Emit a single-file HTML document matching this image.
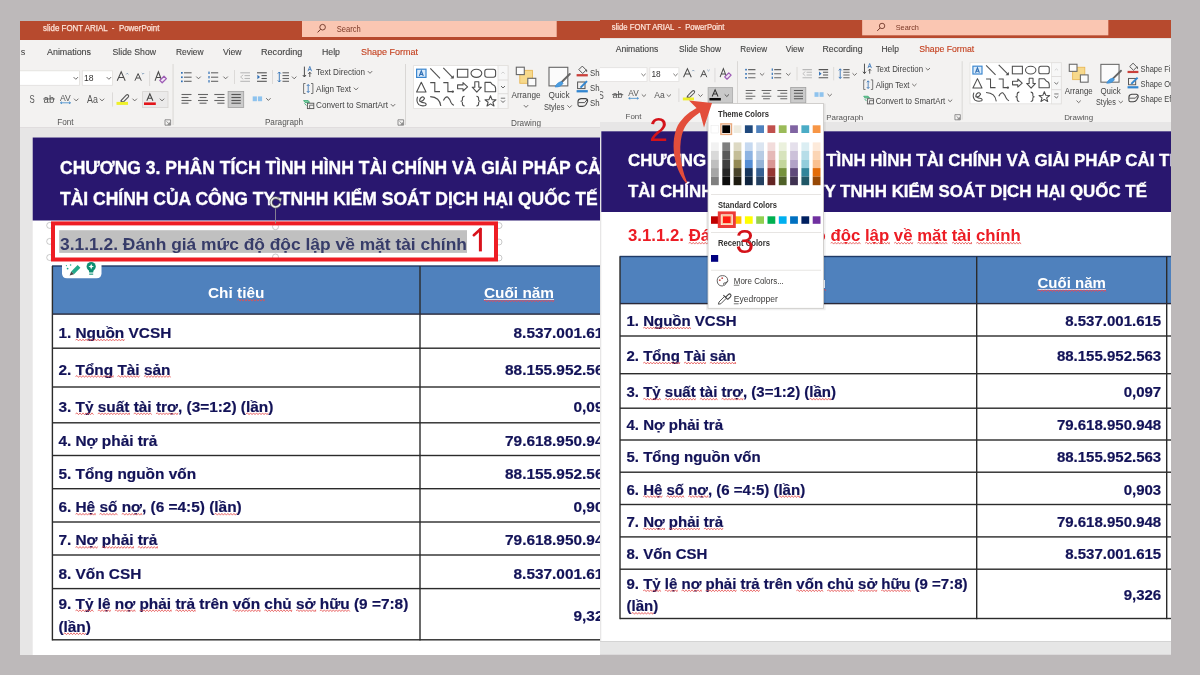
<!DOCTYPE html>
<html><head><meta charset="utf-8"><style>
html,body{margin:0;padding:0;width:1200px;height:675px;overflow:hidden;background:#bdb9ba;}
svg{display:block;font-family:"Liberation Sans",sans-serif;will-change:transform;}
</style></head><body>
<svg width="1200" height="675" viewBox="0 0 1200 675">
<defs>
<clipPath id="cl"><rect x="20" y="21" width="580" height="634"/></clipPath>
<clipPath id="cr"><rect x="600" y="20" width="571" height="634.5"/></clipPath>
</defs>
<rect x="0" y="0" width="1200" height="675" fill="#bdb9ba"/>
<g clip-path="url(#cl)">
<rect x="0.00" y="21.00" width="640.00" height="19.00" fill="#b74a2e" /><text xml:space="preserve" x="43.00" y="31.30" font-size="8.8" fill="#fde3d8" textLength="116.5" lengthAdjust="spacingAndGlyphs" stroke="#fde3d8" stroke-width="0.25">slide FONT ARIAL  -  PowerPoint</text><rect x="302.00" y="21.00" width="254.70" height="16.00" fill="#fac6b2" /><circle cx="322.6" cy="27.2" r="2.8" stroke="#6d3325" stroke-width="0.9" fill="none"/><path d="M320.6,29.3 L317.6,32.4" stroke="#6d3325" stroke-width="1" /><text xml:space="preserve" x="336.70" y="31.60" font-size="8.4" fill="#7a3826" textLength="24" lengthAdjust="spacingAndGlyphs" >Search</text><rect x="0.00" y="40.00" width="640.00" height="87.50" fill="#f3f2f1" /><text xml:space="preserve" x="25.30" y="54.80" font-size="9.2" fill="#444444" text-anchor="end" >Transitions</text><text xml:space="preserve" x="47.00" y="54.80" font-size="9.2" fill="#444444" textLength="44" lengthAdjust="spacingAndGlyphs" stroke="#444444" stroke-width="0.12">Animations</text><text xml:space="preserve" x="112.50" y="54.80" font-size="9.2" fill="#444444" textLength="43.5" lengthAdjust="spacingAndGlyphs" stroke="#444444" stroke-width="0.12">Slide Show</text><text xml:space="preserve" x="176.00" y="54.80" font-size="9.2" fill="#444444" textLength="27.599999999999994" lengthAdjust="spacingAndGlyphs" stroke="#444444" stroke-width="0.12">Review</text><text xml:space="preserve" x="223.00" y="54.80" font-size="9.2" fill="#444444" textLength="18.599999999999994" lengthAdjust="spacingAndGlyphs" stroke="#444444" stroke-width="0.12">View</text><text xml:space="preserve" x="261.00" y="54.80" font-size="9.2" fill="#444444" textLength="41.39999999999998" lengthAdjust="spacingAndGlyphs" stroke="#444444" stroke-width="0.12">Recording</text><text xml:space="preserve" x="322.00" y="54.80" font-size="9.2" fill="#444444" textLength="18" lengthAdjust="spacingAndGlyphs" stroke="#444444" stroke-width="0.12">Help</text><text xml:space="preserve" x="361.00" y="54.80" font-size="9.2" fill="#c43e1c" textLength="57" lengthAdjust="spacingAndGlyphs" stroke="#c43e1c" stroke-width="0.12">Shape Format</text><rect x="-10.00" y="70.80" width="89.40" height="14.50" fill="#ffffff" stroke="#e1dfdd" stroke-width="0.8"/><path d="M73.60,77.10 L75.80,79.30 L78.00,77.10" stroke="#605e5c" stroke-width="0.9" fill="none"/><rect x="82.30" y="70.80" width="30.10" height="14.50" fill="#ffffff" stroke="#e1dfdd" stroke-width="0.8"/><text xml:space="preserve" x="84.00" y="81.00" font-size="8.6" fill="#323130" >18</text><path d="M106.70,77.10 L108.90,79.30 L111.10,77.10" stroke="#605e5c" stroke-width="0.9" fill="none"/><path d="M117.2,80.7 L121.2,71.8 L125.2,80.7 M118.8,77.4 L123.6,77.4" stroke="#4a4a4a" stroke-width="1.05" fill="none"/><path d="M126.2,74.4 L127.3,73.2 L128.4,74.4" stroke="#6f8fb0" stroke-width="0.8" fill="none"/><path d="M134.9,80.7 L138.1,73.6 L141.3,80.7 M136.2,78 L140,78" stroke="#4a4a4a" stroke-width="1.0" fill="none"/><path d="M141.8,73 L143,74.2 L144.2,73" stroke="#6f8fb0" stroke-width="0.8" fill="none"/><rect x="149.30" y="71.00" width="0.80" height="15.00" fill="#d6d4d2" /><path d="M155,80.7 L158.4,71.8 L161.8,80.7 M156.3,77.4 L160.5,77.4" stroke="#4a4a4a" stroke-width="1.05" fill="none"/><path d="M159.8,80.4 L164,76.2 L166.4,78.6 L162.2,82.8 Z" fill="#f3e6f6" stroke="#9d5cb5" stroke-width="1.3" stroke-linejoin="round"/><text xml:space="preserve" x="29.60" y="103.40" font-size="10.6" fill="#555" textLength="5.2" lengthAdjust="spacingAndGlyphs" >S</text><text xml:space="preserve" x="43.60" y="102.60" font-size="10" fill="#555" textLength="10.6" lengthAdjust="spacingAndGlyphs" >ab</text><rect x="43.20" y="98.50" width="11.60" height="0.90" fill="#555" /><text xml:space="preserve" x="60.00" y="100.50" font-size="8.8" fill="#555" textLength="10.8" lengthAdjust="spacingAndGlyphs" >AV</text><path d="M60.5,102.8 L70.5,102.8 M60.5,102.8 L62,101.7 M60.5,102.8 L62,103.9 M70.5,102.8 L69,101.7 M70.5,102.8 L69,103.9" stroke="#3a87c9" stroke-width="0.8" fill="none"/><path d="M74.00,98.70 L76.20,100.90 L78.40,98.70" stroke="#605e5c" stroke-width="0.9" fill="none"/><text xml:space="preserve" x="87.00" y="102.70" font-size="10" fill="#555" textLength="10.8" lengthAdjust="spacingAndGlyphs" >Aa</text><path d="M99.80,98.70 L102.00,100.90 L104.20,98.70" stroke="#605e5c" stroke-width="0.9" fill="none"/><rect x="112.00" y="92.40" width="0.80" height="14.20" fill="#d6d4d2" /><path d="M121,100.6 L126.2,95.2 Q127.4,94.2 128.3,95.1 Q129.2,96 128.2,97.2 L123,102.4 Z" fill="none" stroke="#555" stroke-width="1.1" stroke-linejoin="round"/><path d="M121,100.6 L123,102.4 L119.8,103.2 Z" fill="#4b3f73"/><rect x="116.50" y="101.90" width="11.50" height="3.00" fill="#eef02a" /><path d="M132.50,98.70 L134.70,100.90 L136.90,98.70" stroke="#605e5c" stroke-width="0.9" fill="none"/><rect x="142.60" y="91.60" width="25.40" height="16.00" fill="#ebeaea" stroke="#d6d4d2" stroke-width="0.8"/><path d="M146.8,100.8 L149.85,93.8 L152.9,100.8 M148,98.3 L151.7,98.3" stroke="#444" stroke-width="1.05" fill="none"/><rect x="144.00" y="102.40" width="11.80" height="2.60" fill="#e3151a" /><path d="M159.80,98.70 L162.00,100.90 L164.20,98.70" stroke="#605e5c" stroke-width="0.9" fill="none"/><text xml:space="preserve" x="65.40" y="124.70" font-size="8.2" fill="#555" text-anchor="middle" >Font</text><path d="M165,119.8 L170.6,119.8 L170.6,125.2 L165,125.2 Z M166.6,121.4 L169.6,124.4 M169.6,122.4 L169.6,124.4 L167.6,124.4" stroke="#666" stroke-width="0.7" fill="none"/><rect x="172.60" y="64.00" width="0.90" height="61.00" fill="#d6d4d2" /><rect x="181.00" y="72.00" width="1.70" height="1.70" fill="#2f6fb5" /><rect x="181.00" y="76.40" width="1.70" height="1.70" fill="#2f6fb5" /><rect x="181.00" y="80.50" width="1.70" height="1.70" fill="#2f6fb5" /><path d="M184,72.8 L191.6,72.8" stroke="#666" stroke-width="1.1"/><path d="M184,77.2 L191.6,77.2" stroke="#666" stroke-width="1.1"/><path d="M184,81.3 L191.6,81.3" stroke="#666" stroke-width="1.1"/><path d="M196.30,76.60 L198.50,78.80 L200.70,76.60" stroke="#605e5c" stroke-width="0.9" fill="none"/><rect x="208.40" y="71.60" width="1.20" height="2.40" fill="#2f6fb5" /><rect x="208.40" y="76.00" width="1.20" height="2.40" fill="#2f6fb5" /><rect x="208.40" y="80.10" width="1.20" height="2.40" fill="#2f6fb5" /><path d="M211,72.8 L218.2,72.8" stroke="#666" stroke-width="1.1"/><path d="M211,77.2 L218.2,77.2" stroke="#666" stroke-width="1.1"/><path d="M211,81.3 L218.2,81.3" stroke="#666" stroke-width="1.1"/><path d="M223.40,76.60 L225.60,78.80 L227.80,76.60" stroke="#605e5c" stroke-width="0.9" fill="none"/><rect x="234.20" y="70.00" width="0.80" height="14.00" fill="#d6d4d2" /><path d="M240.3,72.8 L250,72.8" stroke="#b8b8b8" stroke-width="1.1"/><path d="M240.3,81.3 L250,81.3" stroke="#b8b8b8" stroke-width="1.1"/><path d="M244.5,75.6 L250,75.6" stroke="#b8b8b8" stroke-width="1.1"/><path d="M244.5,78.5 L250,78.5" stroke="#b8b8b8" stroke-width="1.1"/><path d="M243.2,74.8 L240.6,77 L243.2,79.2" stroke="#b8b8b8" stroke-width="0.9" fill="none"/><path d="M257,72.8 L266.8,72.8" stroke="#555" stroke-width="1.1"/><path d="M257,81.3 L266.8,81.3" stroke="#555" stroke-width="1.1"/><path d="M261.5,75.6 L266.8,75.6" stroke="#555" stroke-width="1.1"/><path d="M261.5,78.5 L266.8,78.5" stroke="#555" stroke-width="1.1"/><path d="M257.4,74.8 L260,77 L257.4,79.2 Z" fill="#2f6fb5"/><rect x="272.20" y="70.00" width="0.80" height="14.00" fill="#d6d4d2" /><path d="M279.3,72 L279.3,82 M277.8,73.6 L279.3,72 L280.8,73.6 M277.8,80.4 L279.3,82 L280.8,80.4" stroke="#2f6fb5" stroke-width="0.9" fill="none"/><path d="M282.5,72.8 L289,72.8" stroke="#666" stroke-width="1.1"/><path d="M282.5,75.6 L289,75.6" stroke="#666" stroke-width="1.1"/><path d="M282.5,78.5 L289,78.5" stroke="#666" stroke-width="1.1"/><path d="M282.5,81.3 L289,81.3" stroke="#666" stroke-width="1.1"/><path d="M292.00,76.60 L294.20,78.80 L296.40,76.60" stroke="#605e5c" stroke-width="0.9" fill="none"/><path d="M181.5,94.5 L191.5,94.5" stroke="#666" stroke-width="1.1"/><path d="M181.5,100.5 L191.5,100.5" stroke="#666" stroke-width="1.1"/><path d="M181.5,97.5 L188.5,97.5" stroke="#666" stroke-width="1.1"/><path d="M181.5,103.2 L188.5,103.2" stroke="#666" stroke-width="1.1"/><path d="M198,94.5 L208,94.5" stroke="#666" stroke-width="1.1"/><path d="M198,100.5 L208,100.5" stroke="#666" stroke-width="1.1"/><path d="M199.5,97.5 L206.5,97.5" stroke="#666" stroke-width="1.1"/><path d="M199.5,103.2 L206.5,103.2" stroke="#666" stroke-width="1.1"/><path d="M214.3,94.5 L224.5,94.5" stroke="#666" stroke-width="1.1"/><path d="M214.3,100.5 L224.5,100.5" stroke="#666" stroke-width="1.1"/><path d="M217.3,97.5 L224.5,97.5" stroke="#666" stroke-width="1.1"/><path d="M217.3,103.2 L224.5,103.2" stroke="#666" stroke-width="1.1"/><rect x="228.10" y="91.50" width="15.60" height="16.00" fill="#cbcbcb" stroke="#9e9e9e" stroke-width="0.8"/><path d="M231.4,94.5 L240.8,94.5" stroke="#555" stroke-width="1.1"/><path d="M231.4,97.5 L240.8,97.5" stroke="#555" stroke-width="1.1"/><path d="M231.4,100.5 L240.8,100.5" stroke="#555" stroke-width="1.1"/><path d="M231.4,103.2 L240.8,103.2" stroke="#555" stroke-width="1.1"/><rect x="252.70" y="96.40" width="4.20" height="4.80" fill="#8ec3ee" /><rect x="257.90" y="96.40" width="4.20" height="4.80" fill="#8ec3ee" /><path d="M266.20,98.20 L268.40,100.40 L270.60,98.20" stroke="#605e5c" stroke-width="0.9" fill="none"/><path d="M304.4,66.6 L304.4,76.8 M302.8,75 L304.4,77 L306,75" stroke="#444" stroke-width="0.95" fill="none"/><path d="M308,71.2 L309.8,66.4 L311.6,71.2 M308.7,69.6 L310.9,69.6" stroke="#2f6fb5" stroke-width="0.8" fill="none"/><path d="M309.8,77 L309.8,72.4 M308.4,73.8 L309.8,72.2 L311.2,73.8" stroke="#444" stroke-width="0.9" fill="none"/><text xml:space="preserve" x="316.00" y="75.30" font-size="9.0" fill="#444" textLength="49" lengthAdjust="spacingAndGlyphs" >Text Direction</text><path d="M367.80,71.10 L370.00,73.30 L372.20,71.10" stroke="#605e5c" stroke-width="0.9" fill="none"/><path d="M305.5,83.5 L303.6,83.5 L303.6,93.5 L305.5,93.5 M311,83.5 L312.9,83.5 L312.9,93.5 L311,93.5" stroke="#555" stroke-width="0.8" fill="none"/><path d="M308.2,84.5 L308.2,92.5 M306.8,86 L308.2,84.5 L309.6,86 M306.8,91 L308.2,92.5 L309.6,91" stroke="#2f6fb5" stroke-width="0.8" fill="none"/><text xml:space="preserve" x="316.00" y="91.90" font-size="9.0" fill="#444" textLength="35" lengthAdjust="spacingAndGlyphs" >Align Text</text><path d="M353.80,87.70 L356.00,89.90 L358.20,87.70" stroke="#605e5c" stroke-width="0.9" fill="none"/><path d="M303.6,100.6 L308.2,100.6 L309.6,102.4 L305,102.4 Z" fill="#8fd3a8" stroke="#2aa36b" stroke-width="0.8"/><path d="M304.4,103.2 L306.4,105.6" stroke="#2aa36b" stroke-width="0.8"/><rect x="307.4" y="103.2" width="6.4" height="5.4" fill="#f3f2f1" stroke="#555" stroke-width="0.9"/><path d="M309.6,105.2 L313.8,105.2 M309.6,105.2 L309.6,108.6" stroke="#555" stroke-width="0.8"/><text xml:space="preserve" x="316.00" y="108.40" font-size="9.0" fill="#444" textLength="72" lengthAdjust="spacingAndGlyphs" >Convert to SmartArt</text><path d="M390.80,104.10 L393.00,106.30 L395.20,104.10" stroke="#605e5c" stroke-width="0.9" fill="none"/><text xml:space="preserve" x="284.00" y="125.20" font-size="8.2" fill="#555" text-anchor="middle" >Paragraph</text><path d="M398,119.8 L403.6,119.8 L403.6,125.2 L398,125.2 Z M399.6,121.4 L402.6,124.4 M402.6,122.4 L402.6,124.4 L400.6,124.4" stroke="#666" stroke-width="0.7" fill="none"/><rect x="405.00" y="64.00" width="0.90" height="61.00" fill="#d6d4d2" /><rect x="413.60" y="65.60" width="94.40" height="42.90" fill="#ffffff" stroke="#e1dfdd" stroke-width="0.8"/><rect x="498.00" y="65.60" width="10.00" height="42.90" fill="#f7f7f7" stroke="#e1dfdd" stroke-width="0.8"/><path d="M498,80 L508,80 M498,93.7 L508,93.7" stroke="#d8d6d4" stroke-width="0.8"/><path d="M501.3,73.6 L503,72 L504.7,73.6" stroke="#c8c8c8" stroke-width="0.8" fill="none"/><path d="M501.02,86.01 L503.00,87.99 L504.98,86.01" stroke="#555" stroke-width="0.9" fill="none"/><path d="M500.8,98.2 L505.2,98.2" stroke="#555" stroke-width="0.8"/><path d="M501.02,100.51 L503.00,102.49 L504.98,100.51" stroke="#555" stroke-width="0.9" fill="none"/><rect x="416.6" y="69.2" width="9.4" height="8.2" fill="#dcecfb" stroke="#3a86cf" stroke-width="1.2"/><path d="M419.3,76 L421.3,70.8 L423.3,76 M420,74.4 L422.6,74.4" stroke="#2f6fb5" stroke-width="1.1" fill="none"/><path d="M430.3,68.3 L440,78.3" stroke="#4f4f4f" stroke-width="1.1"/><path d="M443.3,67.8 L453,77.8" stroke="#4f4f4f" stroke-width="1.1"/><path d="M450.4,78.6 L453.8,78.6 L453.8,75.2 Z" fill="#4f4f4f"/><rect x="457.4" y="69.3" width="10.4" height="7.9" fill="none" stroke="#4f4f4f" stroke-width="1.1"/><ellipse cx="476.4" cy="73.3" rx="5.4" ry="4.1" fill="none" stroke="#4f4f4f" stroke-width="1.1"/><rect x="484.8" y="69.3" width="10.8" height="7.9" rx="2.2" fill="none" stroke="#4f4f4f" stroke-width="1.1"/><path d="M416.6,92 L421.3,82.2 L426,92 Z" fill="none" stroke="#4f4f4f" stroke-width="1.1" stroke-linejoin="round"/><path d="M430.2,82.6 L434.8,82.6 L434.8,91.6 L440,91.6" fill="none" stroke="#4f4f4f" stroke-width="1.1"/><path d="M443.3,82.6 L447.9,82.6 L447.9,91.6 L452.5,91.6" fill="none" stroke="#4f4f4f" stroke-width="1.1"/><circle cx="452.8" cy="91.6" r="1.2" fill="#4f4f4f"/><path d="M457.6,84.9 L463,84.9 L463,82.6 L467.6,86.8 L463,91 L463,88.7 L457.6,88.7 Z" fill="none" stroke="#4f4f4f" stroke-width="1.1" stroke-linejoin="round"/><path d="M474.8,81.8 L478.8,81.8 L478.8,87.2 L481.4,87.2 L476.8,92.2 L472.2,87.2 L474.8,87.2 Z" fill="none" stroke="#4f4f4f" stroke-width="1.1" stroke-linejoin="round"/><path d="M485,91.8 L485,82.4 L490.6,82.4 L492.4,84.6 Q495.6,85.6 495.6,88.6 L495.6,91.8 Z" fill="none" stroke="#4f4f4f" stroke-width="1.1" stroke-linejoin="round"/><path d="M417.6,96.8 Q415.8,101.5 418.8,104.6 Q422,106.6 425.6,105.4 Q427,104 425,103 Q421.5,102.5 420.5,101.5 Q423.5,101 424.5,98.5 Q424,96.5 422,97 Q419.5,98 419.6,101.5" fill="none" stroke="#4f4f4f" stroke-width="1.1"/><path d="M430.2,96.6 Q439.8,97 440.8,106" fill="none" stroke="#4f4f4f" stroke-width="1.1"/><path d="M443.4,100.5 Q445.5,96.3 447.6,97 Q449.5,98.5 451,102.5 Q452.3,105 454,105.3" fill="none" stroke="#4f4f4f" stroke-width="1.1"/><path d="M464.6,96.3 Q462.4,96.3 462.4,98.5 L462.4,100 Q462.4,101.2 460.6,101.2 Q462.4,101.2 462.4,102.4 L462.4,103.8 Q462.4,106 464.6,106" fill="none" stroke="#4f4f4f" stroke-width="1.1"/><path d="M476.4,96.3 Q478.6,96.3 478.6,98.5 L478.6,100 Q478.6,101.2 480.4,101.2 Q478.6,101.2 478.6,102.4 L478.6,103.8 Q478.6,106 476.4,106" fill="none" stroke="#4f4f4f" stroke-width="1.1"/><path d="M490.5,95.8 L492,99.6 L496,99.8 L492.9,102.3 L494,106 L490.5,103.9 L487,106 L488.1,102.3 L485,99.8 L489,99.6 Z" fill="none" stroke="#4f4f4f" stroke-width="1.1" stroke-linejoin="round"/><rect x="519.8" y="70.3" width="12.6" height="13" fill="#f7d98b" stroke="#e7b24a" stroke-width="0.8"/><rect x="516.3" y="67.2" width="8" height="7.4" fill="#fbfbfb" stroke="#666" stroke-width="1.1"/><rect x="527.8" y="78.3" width="8" height="7.6" fill="#fbfbfb" stroke="#666" stroke-width="1.1"/><text xml:space="preserve" x="526.00" y="98.40" font-size="9" fill="#444" text-anchor="middle" textLength="29" lengthAdjust="spacingAndGlyphs" >Arrange</text><path d="M523.80,105.10 L526.00,107.30 L528.20,105.10" stroke="#605e5c" stroke-width="0.9" fill="none"/><rect x="549" y="67.3" width="18.8" height="18.6" fill="#fbfbfb" stroke="#666" stroke-width="1.1"/><path d="M569.8,74 L561.5,82.2" stroke="#666" stroke-width="2.0" stroke-linecap="round"/><path d="M561.8,81.6 Q557,82.2 555,87 Q560.5,87.4 563,83.4 Z" fill="#4b9de0" stroke="#3286d0" stroke-width="0.6"/><text xml:space="preserve" x="559.00" y="98.40" font-size="9" fill="#444" text-anchor="middle" textLength="21" lengthAdjust="spacingAndGlyphs" >Quick</text><text xml:space="preserve" x="554.20" y="109.60" font-size="9" fill="#444" text-anchor="middle" textLength="20.4" lengthAdjust="spacingAndGlyphs" >Styles</text><path d="M567.40,105.40 L569.60,107.60 L571.80,105.40" stroke="#605e5c" stroke-width="0.9" fill="none"/><path d="M578.8,69.6 L582.3,66.1 L586.2,70 L582.7,73.5 Z" fill="none" stroke="#555" stroke-width="1"/><path d="M586.5,69 Q588,71.5 586.8,72.3 Q585.6,71.5 586.5,69 Z" fill="#333"/><rect x="576.6" y="74.1" width="11.2" height="2.3" fill="#c9403a"/><text xml:space="preserve" x="590.00" y="75.50" font-size="9" fill="#444" textLength="34.42" lengthAdjust="spacingAndGlyphs" >Shape Fill</text><rect x="577.6" y="82" width="7.4" height="6.6" fill="none" stroke="#555" stroke-width="1"/><path d="M580.5,87.6 L587,81.1" stroke="#3286d0" stroke-width="2"/><rect x="576.6" y="90.1" width="11.2" height="2.3" fill="#3286d0"/><text xml:space="preserve" x="590.00" y="90.80" font-size="9" fill="#444" textLength="49.05" lengthAdjust="spacingAndGlyphs" >Shape Outline</text><path d="M578,104.8 L578,101.6 Q578,99 581,98.6 L585.8,98.6 Q587.8,99 587.6,101.4 L586,104.6 Q585,106.4 582.6,106.4 L579.6,106.4 Q578,106.3 578,104.8 Z" fill="none" stroke="#444" stroke-width="1.1"/><path d="M578.4,102.6 L584.6,102.6 L587.2,99.6" stroke="#444" stroke-width="0.9" fill="none"/><text xml:space="preserve" x="590.00" y="106.20" font-size="9" fill="#444" textLength="48.05" lengthAdjust="spacingAndGlyphs" >Shape Effects</text><text xml:space="preserve" x="526.00" y="125.50" font-size="8.2" fill="#555" text-anchor="middle" >Drawing</text>
<rect x="20.00" y="127.50" width="600.00" height="540.00" fill="#e7e6e6" /><rect x="32.70" y="137.50" width="600.00" height="540.00" fill="#ffffff" /><rect x="32.70" y="137.50" width="600.00" height="83.00" fill="#29176f" /><text xml:space="preserve" x="60.00" y="173.80" font-size="17.5" fill="#ffffff" font-weight="bold" stroke="#ffffff" stroke-width="0.35">CHƯƠNG 3. PHÂN TÍCH TÌNH HÌNH TÀI CHÍNH VÀ GIẢI PHÁP CẢI THIỆN</text><text xml:space="preserve" x="60.00" y="204.50" font-size="17.5" fill="#ffffff" font-weight="bold" stroke="#ffffff" stroke-width="0.35">TÀI CHÍNH CỦA CÔNG TY TNHH KIỂM SOÁT DỊCH HẠI QUỐC TẾ</text><rect x="52.40" y="266.00" width="605.60" height="373.80" fill="#ffffff" /><rect x="52.40" y="266.00" width="605.60" height="48.10" fill="#4f81bd" /><text xml:space="preserve" x="236.20" y="298.00" font-size="15.4" fill="#ffffff" font-weight="bold" text-anchor="middle" >Chỉ tiêu</text><path d="M237.05,300.20 L238.55,299.30 L240.05,301.10 L241.55,299.30 L243.05,301.10 L244.55,299.30 L246.05,301.10 L247.55,299.30 L249.05,301.10 L250.55,299.30 L252.05,301.10 L253.55,299.30 L255.05,301.10 L256.55,299.30 L258.05,301.10 L259.55,299.30 L261.05,301.10 L262.55,299.30 L264.05,301.10 L264.43,299.30" stroke="#e45050" stroke-width="0.8" fill="none"/><text xml:space="preserve" x="519.00" y="298.00" font-size="15.4" fill="#ffffff" font-weight="bold" text-anchor="middle" >Cuối năm</text><rect x="483.92" y="299.20" width="70.15" height="0.80" fill="#f4f4f8" /><path d="M483.92,300.90 L485.42,300.00 L486.92,301.80 L488.42,300.00 L489.92,301.80 L491.42,300.00 L492.92,301.80 L494.42,300.00 L495.92,301.80 L497.42,300.00 L498.92,301.80 L500.42,300.00 L501.92,301.80 L503.42,300.00 L504.92,301.80 L506.42,300.00 L507.92,301.80 L509.42,300.00 L510.92,301.80 L512.42,300.00 L513.92,301.80 L515.42,300.00 L516.92,301.80 L518.42,300.00 L519.92,301.80 L521.42,300.00 L522.92,301.80 L524.42,300.00 L525.92,301.80 L527.42,300.00 L528.92,301.80 L530.42,300.00 L531.92,301.80 L533.42,300.00 L534.92,301.80 L536.42,300.00 L537.92,301.80 L539.42,300.00 L540.92,301.80 L542.42,300.00 L543.92,301.80 L545.42,300.00 L546.92,301.80 L548.42,300.00 L549.92,301.80 L551.42,300.00 L552.92,301.80 L554.08,300.00" stroke="#e8485a" stroke-width="0.9" fill="none"/><rect x="52.00" y="265.30" width="605.60" height="1.40" fill="#1f3a66" /><rect x="51.70" y="266.00" width="1.40" height="374.50" fill="#2b2b2b" /><rect x="419.30" y="266.00" width="1.40" height="374.50" fill="#2b2b2b" /><rect x="52.40" y="313.40" width="605.60" height="1.40" fill="#2a2a3a" /><rect x="52.40" y="347.50" width="605.60" height="1.40" fill="#2b2b2b" /><rect x="52.40" y="386.30" width="605.60" height="1.40" fill="#2b2b2b" /><rect x="52.40" y="422.10" width="605.60" height="1.40" fill="#2b2b2b" /><rect x="52.40" y="454.80" width="605.60" height="1.40" fill="#2b2b2b" /><rect x="52.40" y="488.00" width="605.60" height="1.40" fill="#2b2b2b" /><rect x="52.40" y="521.30" width="605.60" height="1.40" fill="#2b2b2b" /><rect x="52.40" y="554.30" width="605.60" height="1.40" fill="#2b2b2b" /><rect x="52.40" y="587.90" width="605.60" height="1.40" fill="#2b2b2b" /><rect x="52.40" y="639.10" width="605.60" height="1.40" fill="#2b2b2b" /><text xml:space="preserve" x="58.40" y="338.05" font-size="15.4" fill="#131358" font-weight="bold" stroke="#131358" stroke-width="0.2">1. Nguồn VCSH</text><path d="M75.52,340.05 L77.02,339.15 L78.52,340.95 L80.02,339.15 L81.52,340.95 L83.02,339.15 L84.52,340.95 L86.02,339.15 L87.52,340.95 L89.02,339.15 L90.52,340.95 L92.02,339.15 L93.52,340.95 L95.02,339.15 L96.52,340.95 L98.02,339.15 L99.52,340.95 L101.02,339.15 L102.52,340.95 L104.02,339.15 L105.52,340.95 L107.02,339.15 L108.52,340.95 L110.02,339.15 L111.52,340.95 L113.02,339.15 L114.52,340.95 L116.02,339.15 L117.52,340.95 L119.02,339.15 L120.52,340.95 L122.02,339.15 L123.52,340.95 L124.27,339.15" stroke="#e45050" stroke-width="0.8" fill="none"/><text xml:space="preserve" x="612.00" y="338.05" font-size="15.4" fill="#131358" font-weight="bold" text-anchor="end" stroke="#131358" stroke-width="0.2">8.537.001.615</text><text xml:space="preserve" x="58.40" y="374.50" font-size="15.4" fill="#131358" font-weight="bold" stroke="#131358" stroke-width="0.2">2. Tổng Tài sản</text><path d="M75.52,376.50 L77.02,375.60 L78.52,377.40 L80.02,375.60 L81.52,377.40 L83.02,375.60 L84.52,377.40 L86.02,375.60 L87.52,377.40 L89.02,375.60 L90.52,377.40 L92.02,375.60 L93.52,377.40 L95.02,375.60 L96.52,377.40 L98.02,375.60 L99.52,377.40 L101.02,375.60 L102.52,377.40 L104.02,375.60 L105.52,377.40 L107.02,375.60 L108.52,377.40 L110.02,375.60 L111.52,377.40 L113.02,375.60 L113.14,377.40" stroke="#e45050" stroke-width="0.8" fill="none"/><path d="M117.42,376.50 L118.92,375.60 L120.42,377.40 L121.92,375.60 L123.42,377.40 L124.92,375.60 L126.42,377.40 L127.92,375.60 L129.42,377.40 L130.92,375.60 L132.42,377.40 L133.92,375.60 L135.42,377.40 L136.92,375.60 L138.42,377.40 L139.67,375.60" stroke="#e45050" stroke-width="0.8" fill="none"/><path d="M143.95,376.50 L145.45,375.60 L146.95,377.40 L148.45,375.60 L149.95,377.40 L151.45,375.60 L152.95,377.40 L154.45,375.60 L155.95,377.40 L157.45,375.60 L158.95,377.40 L160.45,375.60 L161.95,377.40 L163.45,375.60 L164.95,377.40 L166.45,375.60 L167.95,377.40 L169.45,375.60 L170.48,377.40" stroke="#e45050" stroke-width="0.8" fill="none"/><text xml:space="preserve" x="612.00" y="374.50" font-size="15.4" fill="#131358" font-weight="bold" text-anchor="end" stroke="#131358" stroke-width="0.2">88.155.952.563</text><text xml:space="preserve" x="58.40" y="411.80" font-size="15.4" fill="#131358" font-weight="bold" stroke="#131358" stroke-width="0.2">3. Tỷ suất tài trợ, (3=1:2) (lần)</text><path d="M75.52,413.80 L77.02,412.90 L78.52,414.70 L80.02,412.90 L81.52,414.70 L83.02,412.90 L84.52,414.70 L86.02,412.90 L87.52,414.70 L89.02,412.90 L90.52,414.70 L92.02,412.90 L93.49,414.70" stroke="#e45050" stroke-width="0.8" fill="none"/><path d="M97.77,413.80 L99.27,412.90 L100.77,414.70 L102.27,412.90 L103.77,414.70 L105.27,412.90 L106.77,414.70 L108.27,412.90 L109.77,414.70 L111.27,412.90 L112.77,414.70 L114.27,412.90 L115.77,414.70 L117.27,412.90 L118.77,414.70 L120.27,412.90 L121.77,414.70 L123.27,412.90 L124.77,414.70 L126.27,412.90 L127.77,414.70 L129.27,412.90 L129.43,414.70" stroke="#e45050" stroke-width="0.8" fill="none"/><path d="M133.71,413.80 L135.21,412.90 L136.71,414.70 L138.21,412.90 L139.71,414.70 L141.21,412.90 L142.71,414.70 L144.21,412.90 L145.71,414.70 L147.21,412.90 L148.71,414.70 L150.21,412.90 L151.68,414.70" stroke="#e45050" stroke-width="0.8" fill="none"/><path d="M155.96,413.80 L157.46,412.90 L158.96,414.70 L160.46,412.90 L161.96,414.70 L163.46,412.90 L164.96,414.70 L166.46,412.90 L167.96,414.70 L169.46,412.90 L170.96,414.70 L172.46,412.90 L173.96,414.70 L175.46,412.90 L176.96,414.70 L178.03,412.90" stroke="#e45050" stroke-width="0.8" fill="none"/><path d="M246.06,413.80 L247.56,412.90 L249.06,414.70 L250.56,412.90 L252.06,414.70 L253.56,412.90 L255.06,414.70 L256.56,412.90 L258.06,414.70 L259.56,412.90 L261.06,414.70 L262.56,412.90 L264.06,414.70 L265.56,412.90 L267.06,414.70 L268.31,412.90" stroke="#e45050" stroke-width="0.8" fill="none"/><text xml:space="preserve" x="612.00" y="411.80" font-size="15.4" fill="#131358" font-weight="bold" text-anchor="end" stroke="#131358" stroke-width="0.2">0,097</text><text xml:space="preserve" x="58.40" y="446.05" font-size="15.4" fill="#131358" font-weight="bold" stroke="#131358" stroke-width="0.2">4. Nợ phải trả</text><text xml:space="preserve" x="612.00" y="446.05" font-size="15.4" fill="#131358" font-weight="bold" text-anchor="end" stroke="#131358" stroke-width="0.2">79.618.950.948</text><text xml:space="preserve" x="58.40" y="479.00" font-size="15.4" fill="#131358" font-weight="bold" stroke="#131358" stroke-width="0.2">5. Tổng nguồn vốn</text><text xml:space="preserve" x="612.00" y="479.00" font-size="15.4" fill="#131358" font-weight="bold" text-anchor="end" stroke="#131358" stroke-width="0.2">88.155.952.563</text><text xml:space="preserve" x="58.40" y="512.25" font-size="15.4" fill="#131358" font-weight="bold" stroke="#131358" stroke-width="0.2">6. Hệ số nợ, (6 =4:5) (lần)</text><path d="M75.52,514.25 L77.02,513.35 L78.52,515.15 L80.02,513.35 L81.52,515.15 L83.02,513.35 L84.52,515.15 L86.02,513.35 L87.52,515.15 L89.02,513.35 L90.52,515.15 L92.02,513.35 L93.52,515.15 L95.02,513.35 L95.21,515.15" stroke="#e45050" stroke-width="0.8" fill="none"/><path d="M99.48,514.25 L100.98,513.35 L102.48,515.15 L103.98,513.35 L105.48,515.15 L106.98,513.35 L108.48,515.15 L109.98,513.35 L111.48,515.15 L112.98,513.35 L114.48,515.15 L115.98,513.35 L117.45,515.15" stroke="#e45050" stroke-width="0.8" fill="none"/><path d="M121.73,514.25 L123.23,513.35 L124.73,515.15 L126.23,513.35 L127.73,515.15 L129.23,513.35 L130.73,515.15 L132.23,513.35 L133.73,515.15 L135.23,513.35 L136.73,515.15 L138.23,513.35 L139.73,515.15 L141.23,513.35 L142.09,515.15" stroke="#e45050" stroke-width="0.8" fill="none"/><path d="M214.40,514.25 L215.90,513.35 L217.40,515.15 L218.90,513.35 L220.40,515.15 L221.90,513.35 L223.40,515.15 L224.90,513.35 L226.40,515.15 L227.90,513.35 L229.40,515.15 L230.90,513.35 L232.40,515.15 L233.90,513.35 L235.40,515.15 L236.65,513.35" stroke="#e45050" stroke-width="0.8" fill="none"/><text xml:space="preserve" x="612.00" y="512.25" font-size="15.4" fill="#131358" font-weight="bold" text-anchor="end" stroke="#131358" stroke-width="0.2">0,903</text><text xml:space="preserve" x="58.40" y="545.40" font-size="15.4" fill="#131358" font-weight="bold" stroke="#131358" stroke-width="0.2">7. Nợ phải trả</text><path d="M75.52,547.40 L77.02,546.50 L78.52,548.30 L80.02,546.50 L81.52,548.30 L83.02,546.50 L84.52,548.30 L86.02,546.50 L87.52,548.30 L89.02,546.50 L90.52,548.30 L92.02,546.50 L93.52,548.30 L95.02,546.50 L96.52,548.30 L97.59,546.50" stroke="#e45050" stroke-width="0.8" fill="none"/><path d="M101.87,547.40 L103.37,546.50 L104.87,548.30 L106.37,546.50 L107.87,548.30 L109.37,546.50 L110.87,548.30 L112.37,546.50 L113.87,548.30 L115.37,546.50 L116.87,548.30 L118.37,546.50 L119.87,548.30 L121.37,546.50 L122.87,548.30 L124.37,546.50 L125.87,548.30 L127.37,546.50 L128.87,548.30 L130.37,546.50 L131.87,548.30 L133.37,546.50 L133.52,548.30" stroke="#e45050" stroke-width="0.8" fill="none"/><path d="M137.80,547.40 L139.30,546.50 L140.80,548.30 L142.30,546.50 L143.80,548.30 L145.30,546.50 L146.80,548.30 L148.30,546.50 L149.80,548.30 L151.30,546.50 L152.80,548.30 L154.30,546.50 L155.80,548.30 L157.30,546.50 L157.49,548.30" stroke="#e45050" stroke-width="0.8" fill="none"/><text xml:space="preserve" x="612.00" y="545.40" font-size="15.4" fill="#131358" font-weight="bold" text-anchor="end" stroke="#131358" stroke-width="0.2">79.618.950.948</text><text xml:space="preserve" x="58.40" y="578.70" font-size="15.4" fill="#131358" font-weight="bold" stroke="#131358" stroke-width="0.2">8. Vốn CSH</text><text xml:space="preserve" x="612.00" y="578.70" font-size="15.4" fill="#131358" font-weight="bold" text-anchor="end" stroke="#131358" stroke-width="0.2">8.537.001.615</text><text xml:space="preserve" x="58.40" y="608.70" font-size="15.4" fill="#131358" font-weight="bold" stroke="#131358" stroke-width="0.2">9. Tỷ lệ nợ phải trả trên vốn chủ sở hữu (9 =7:8)</text><path d="M75.52,610.70 L77.02,609.80 L78.52,611.60 L80.02,609.80 L81.52,611.60 L83.02,609.80 L84.52,611.60 L86.02,609.80 L87.52,611.60 L89.02,609.80 L90.52,611.60 L92.02,609.80 L93.49,611.60" stroke="#e45050" stroke-width="0.8" fill="none"/><path d="M97.77,610.70 L99.27,609.80 L100.77,611.60 L102.27,609.80 L103.77,611.60 L105.27,609.80 L106.77,611.60 L108.27,609.80 L109.77,611.60 L110.61,609.80" stroke="#e45050" stroke-width="0.8" fill="none"/><path d="M114.89,610.70 L116.39,609.80 L117.89,611.60 L119.39,609.80 L120.89,611.60 L122.39,609.80 L123.89,611.60 L125.39,609.80 L126.89,611.60 L128.39,609.80 L129.89,611.60 L131.39,609.80 L132.89,611.60 L134.39,609.80 L135.24,611.60" stroke="#e45050" stroke-width="0.8" fill="none"/><path d="M139.52,610.70 L141.02,609.80 L142.52,611.60 L144.02,609.80 L145.52,611.60 L147.02,609.80 L148.52,611.60 L150.02,609.80 L151.52,611.60 L153.02,609.80 L154.52,611.60 L156.02,609.80 L157.52,611.60 L159.02,609.80 L160.52,611.60 L162.02,609.80 L163.52,611.60 L165.02,609.80 L166.52,611.60 L168.02,609.80 L169.52,611.60 L171.02,609.80 L171.18,611.60" stroke="#e45050" stroke-width="0.8" fill="none"/><path d="M175.45,610.70 L176.95,609.80 L178.45,611.60 L179.95,609.80 L181.45,611.60 L182.95,609.80 L184.45,611.60 L185.95,609.80 L187.45,611.60 L188.95,609.80 L190.45,611.60 L191.95,609.80 L193.45,611.60 L194.95,609.80 L195.14,611.60" stroke="#e45050" stroke-width="0.8" fill="none"/><path d="M232.79,610.70 L234.29,609.80 L235.79,611.60 L237.29,609.80 L238.79,611.60 L240.29,609.80 L241.79,611.60 L243.29,609.80 L244.79,611.60 L246.29,609.80 L247.79,611.60 L249.29,609.80 L250.79,611.60 L252.29,609.80 L253.79,611.60 L255.29,609.80 L256.79,611.60 L258.29,609.80 L259.79,611.60 L260.16,609.80" stroke="#e45050" stroke-width="0.8" fill="none"/><path d="M264.44,610.70 L265.94,609.80 L267.44,611.60 L268.94,609.80 L270.44,611.60 L271.94,609.80 L273.44,611.60 L274.94,609.80 L276.44,611.60 L277.94,609.80 L279.44,611.60 L280.94,609.80 L282.44,611.60 L283.94,609.80 L285.44,611.60 L286.94,609.80 L288.44,611.60 L289.94,609.80 L291.44,611.60 L291.82,609.80" stroke="#e45050" stroke-width="0.8" fill="none"/><path d="M296.10,610.70 L297.60,609.80 L299.10,611.60 L300.60,609.80 L302.10,611.60 L303.60,609.80 L305.10,611.60 L306.60,609.80 L308.10,611.60 L309.60,609.80 L311.10,611.60 L312.60,609.80 L314.10,611.60 L315.60,609.80 L315.61,611.60" stroke="#e45050" stroke-width="0.8" fill="none"/><path d="M319.89,610.70 L321.39,609.80 L322.89,611.60 L324.39,609.80 L325.89,611.60 L327.39,609.80 L328.89,611.60 L330.39,609.80 L331.89,611.60 L333.39,609.80 L334.89,611.60 L336.39,609.80 L337.89,611.60 L339.39,609.80 L340.89,611.60 L342.39,609.80 L343.89,611.60 L345.39,609.80 L346.89,611.60 L348.39,609.80 L349.85,611.60" stroke="#e45050" stroke-width="0.8" fill="none"/><text xml:space="preserve" x="58.40" y="631.80" font-size="15.4" fill="#131358" font-weight="bold" stroke="#131358" stroke-width="0.2">(lần)</text><path d="M63.53,633.80 L65.03,632.90 L66.53,634.70 L68.03,632.90 L69.53,634.70 L71.03,632.90 L72.53,634.70 L74.03,632.90 L75.53,634.70 L77.03,632.90 L78.53,634.70 L80.03,632.90 L81.53,634.70 L83.03,632.90 L84.53,634.70 L85.78,632.90" stroke="#e45050" stroke-width="0.8" fill="none"/><text xml:space="preserve" x="612.00" y="621.24" font-size="15.4" fill="#131358" font-weight="bold" text-anchor="end" stroke="#131358" stroke-width="0.2">9,326</text><rect x="59.20" y="230.20" width="407.80" height="22.70" fill="#c0c0c0" /><text xml:space="preserve" x="60.00" y="250.00" font-size="17.4" fill="#373c69" font-weight="bold" >3.1.1.2. Đánh giá mức độ độc lập về mặt tài chính</text><path d="M480.4,251.4 L480.4,228.6" stroke="#d8121b" stroke-width="3"/><path d="M480.6,229 L473.8,235.2" stroke="#d8121b" stroke-width="2.6" stroke-linecap="round"/><circle cx="49.7" cy="225.4" r="3" fill="#ffffff" stroke="#a0a0a0" stroke-width="0.7" fill-opacity="0.6" stroke-opacity="0.8"/><circle cx="49.7" cy="241.4" r="3" fill="#ffffff" stroke="#a0a0a0" stroke-width="0.7" fill-opacity="0.6" stroke-opacity="0.8"/><circle cx="49.7" cy="257.5" r="3" fill="#ffffff" stroke="#a0a0a0" stroke-width="0.7" fill-opacity="0.6" stroke-opacity="0.8"/><circle cx="499" cy="225.6" r="3" fill="#ffffff" stroke="#a0a0a0" stroke-width="0.7" fill-opacity="0.6" stroke-opacity="0.8"/><circle cx="499" cy="242" r="3" fill="#ffffff" stroke="#a0a0a0" stroke-width="0.7" fill-opacity="0.6" stroke-opacity="0.8"/><circle cx="499" cy="258" r="3" fill="#ffffff" stroke="#a0a0a0" stroke-width="0.7" fill-opacity="0.6" stroke-opacity="0.8"/><circle cx="275.5" cy="226.7" r="3" fill="#ffffff" stroke="#a0a0a0" stroke-width="0.7" fill-opacity="0.6" stroke-opacity="0.8"/><circle cx="275.5" cy="257" r="3" fill="#ffffff" stroke="#a0a0a0" stroke-width="0.7" fill-opacity="0.6" stroke-opacity="0.8"/><rect x="53" y="223.4" width="443" height="36.1" fill="none" stroke="#ee1d24" stroke-width="4"/><path d="M275.5,208 L275.5,223.5" stroke="#9a9a9a" stroke-width="0.8"/><path d="M279.2,199.4 A4.6,4.6 0 1 0 280.1,203.6" stroke="#5a5a5a" stroke-width="3.0" fill="none"/><path d="M279.2,199.4 A4.6,4.6 0 1 0 280.1,203.6" stroke="#ececec" stroke-width="1.6" fill="none"/><path d="M277.6,197.6 L281.8,198.2 L280.4,202.4 Z" fill="#ececec" stroke="#5a5a5a" stroke-width="0.6"/><path d="M62,262 L101.5,262 L101.5,273.3 Q101.5,278.3 96.5,278.3 L67,278.3 Q62,278.3 62,273.3 Z" fill="#ffffff"/><path d="M71.2,271.4 L77.6,265 L80.4,267.8 L74,274.2 Z" fill="#21a98a"/><path d="M71.2,271.4 L74,274.2 L69.6,275.6 Z" fill="#4a4a4a"/><circle cx="67.6" cy="268.6" r="0.9" fill="#21a98a"/><circle cx="70.6" cy="265" r="0.8" fill="#21a98a"/><circle cx="66.4" cy="265.6" r="0.6" fill="#21a98a"/><circle cx="91.2" cy="266.6" r="4.6" fill="#0e8d72"/><path d="M88.8,270 L93.6,270 L93.2,272.6 L89.2,272.6 Z" fill="#0e8d72"/><rect x="89.2" y="273.6" width="4" height="1.1" fill="#0e8d72"/><path d="M91.2,263.8 Q91.5,266.3 94,266.6 Q91.5,266.9 91.2,269.4 Q90.9,266.9 88.4,266.6 Q90.9,266.3 91.2,263.8 Z" fill="#ffffff"/>
</g>
<g clip-path="url(#cr)">
<g transform="translate(600,20) scale(0.9665,0.958) translate(-30.76,-21)">
<rect x="0.00" y="21.00" width="640.00" height="19.00" fill="#b74a2e" /><text xml:space="preserve" x="43.00" y="31.30" font-size="8.8" fill="#fde3d8" textLength="116.5" lengthAdjust="spacingAndGlyphs" stroke="#fde3d8" stroke-width="0.25">slide FONT ARIAL  -  PowerPoint</text><rect x="302.00" y="21.00" width="254.70" height="16.00" fill="#fac6b2" /><circle cx="322.6" cy="27.2" r="2.8" stroke="#6d3325" stroke-width="0.9" fill="none"/><path d="M320.6,29.3 L317.6,32.4" stroke="#6d3325" stroke-width="1" /><text xml:space="preserve" x="336.70" y="31.60" font-size="8.4" fill="#7a3826" textLength="24" lengthAdjust="spacingAndGlyphs" >Search</text><rect x="0.00" y="40.00" width="640.00" height="87.50" fill="#f3f2f1" /><text xml:space="preserve" x="25.30" y="54.80" font-size="9.2" fill="#444444" text-anchor="end" >Transitions</text><text xml:space="preserve" x="47.00" y="54.80" font-size="9.2" fill="#444444" textLength="44" lengthAdjust="spacingAndGlyphs" stroke="#444444" stroke-width="0.12">Animations</text><text xml:space="preserve" x="112.50" y="54.80" font-size="9.2" fill="#444444" textLength="43.5" lengthAdjust="spacingAndGlyphs" stroke="#444444" stroke-width="0.12">Slide Show</text><text xml:space="preserve" x="176.00" y="54.80" font-size="9.2" fill="#444444" textLength="27.599999999999994" lengthAdjust="spacingAndGlyphs" stroke="#444444" stroke-width="0.12">Review</text><text xml:space="preserve" x="223.00" y="54.80" font-size="9.2" fill="#444444" textLength="18.599999999999994" lengthAdjust="spacingAndGlyphs" stroke="#444444" stroke-width="0.12">View</text><text xml:space="preserve" x="261.00" y="54.80" font-size="9.2" fill="#444444" textLength="41.39999999999998" lengthAdjust="spacingAndGlyphs" stroke="#444444" stroke-width="0.12">Recording</text><text xml:space="preserve" x="322.00" y="54.80" font-size="9.2" fill="#444444" textLength="18" lengthAdjust="spacingAndGlyphs" stroke="#444444" stroke-width="0.12">Help</text><text xml:space="preserve" x="361.00" y="54.80" font-size="9.2" fill="#c43e1c" textLength="57" lengthAdjust="spacingAndGlyphs" stroke="#c43e1c" stroke-width="0.12">Shape Format</text><rect x="-10.00" y="70.80" width="89.40" height="14.50" fill="#ffffff" stroke="#e1dfdd" stroke-width="0.8"/><path d="M73.60,77.10 L75.80,79.30 L78.00,77.10" stroke="#605e5c" stroke-width="0.9" fill="none"/><rect x="82.30" y="70.80" width="30.10" height="14.50" fill="#ffffff" stroke="#e1dfdd" stroke-width="0.8"/><text xml:space="preserve" x="84.00" y="81.00" font-size="8.6" fill="#323130" >18</text><path d="M106.70,77.10 L108.90,79.30 L111.10,77.10" stroke="#605e5c" stroke-width="0.9" fill="none"/><path d="M117.2,80.7 L121.2,71.8 L125.2,80.7 M118.8,77.4 L123.6,77.4" stroke="#4a4a4a" stroke-width="1.05" fill="none"/><path d="M126.2,74.4 L127.3,73.2 L128.4,74.4" stroke="#6f8fb0" stroke-width="0.8" fill="none"/><path d="M134.9,80.7 L138.1,73.6 L141.3,80.7 M136.2,78 L140,78" stroke="#4a4a4a" stroke-width="1.0" fill="none"/><path d="M141.8,73 L143,74.2 L144.2,73" stroke="#6f8fb0" stroke-width="0.8" fill="none"/><rect x="149.30" y="71.00" width="0.80" height="15.00" fill="#d6d4d2" /><path d="M155,80.7 L158.4,71.8 L161.8,80.7 M156.3,77.4 L160.5,77.4" stroke="#4a4a4a" stroke-width="1.05" fill="none"/><path d="M159.8,80.4 L164,76.2 L166.4,78.6 L162.2,82.8 Z" fill="#f3e6f6" stroke="#9d5cb5" stroke-width="1.3" stroke-linejoin="round"/><text xml:space="preserve" x="29.60" y="103.40" font-size="10.6" fill="#555" textLength="5.2" lengthAdjust="spacingAndGlyphs" >S</text><text xml:space="preserve" x="43.60" y="102.60" font-size="10" fill="#555" textLength="10.6" lengthAdjust="spacingAndGlyphs" >ab</text><rect x="43.20" y="98.50" width="11.60" height="0.90" fill="#555" /><text xml:space="preserve" x="60.00" y="100.50" font-size="8.8" fill="#555" textLength="10.8" lengthAdjust="spacingAndGlyphs" >AV</text><path d="M60.5,102.8 L70.5,102.8 M60.5,102.8 L62,101.7 M60.5,102.8 L62,103.9 M70.5,102.8 L69,101.7 M70.5,102.8 L69,103.9" stroke="#3a87c9" stroke-width="0.8" fill="none"/><path d="M74.00,98.70 L76.20,100.90 L78.40,98.70" stroke="#605e5c" stroke-width="0.9" fill="none"/><text xml:space="preserve" x="87.00" y="102.70" font-size="10" fill="#555" textLength="10.8" lengthAdjust="spacingAndGlyphs" >Aa</text><path d="M99.80,98.70 L102.00,100.90 L104.20,98.70" stroke="#605e5c" stroke-width="0.9" fill="none"/><rect x="112.00" y="92.40" width="0.80" height="14.20" fill="#d6d4d2" /><path d="M121,100.6 L126.2,95.2 Q127.4,94.2 128.3,95.1 Q129.2,96 128.2,97.2 L123,102.4 Z" fill="none" stroke="#555" stroke-width="1.1" stroke-linejoin="round"/><path d="M121,100.6 L123,102.4 L119.8,103.2 Z" fill="#4b3f73"/><rect x="116.50" y="101.90" width="11.50" height="3.00" fill="#eef02a" /><path d="M132.50,98.70 L134.70,100.90 L136.90,98.70" stroke="#605e5c" stroke-width="0.9" fill="none"/><rect x="142.60" y="91.60" width="25.40" height="16.00" fill="#c9c9c9" stroke="#a8a8a8" stroke-width="0.8"/><path d="M146.8,100.8 L149.85,93.8 L152.9,100.8 M148,98.3 L151.7,98.3" stroke="#333" stroke-width="1.05" fill="none"/><rect x="144.00" y="102.40" width="11.80" height="2.60" fill="#0a0a0a" /><path d="M159.80,98.70 L162.00,100.90 L164.20,98.70" stroke="#444" stroke-width="0.9" fill="none"/><text xml:space="preserve" x="65.40" y="124.70" font-size="8.2" fill="#555" text-anchor="middle" >Font</text><path d="M165,119.8 L170.6,119.8 L170.6,125.2 L165,125.2 Z M166.6,121.4 L169.6,124.4 M169.6,122.4 L169.6,124.4 L167.6,124.4" stroke="#666" stroke-width="0.7" fill="none"/><rect x="172.60" y="64.00" width="0.90" height="61.00" fill="#d6d4d2" /><rect x="181.00" y="72.00" width="1.70" height="1.70" fill="#2f6fb5" /><rect x="181.00" y="76.40" width="1.70" height="1.70" fill="#2f6fb5" /><rect x="181.00" y="80.50" width="1.70" height="1.70" fill="#2f6fb5" /><path d="M184,72.8 L191.6,72.8" stroke="#666" stroke-width="1.1"/><path d="M184,77.2 L191.6,77.2" stroke="#666" stroke-width="1.1"/><path d="M184,81.3 L191.6,81.3" stroke="#666" stroke-width="1.1"/><path d="M196.30,76.60 L198.50,78.80 L200.70,76.60" stroke="#605e5c" stroke-width="0.9" fill="none"/><rect x="208.40" y="71.60" width="1.20" height="2.40" fill="#2f6fb5" /><rect x="208.40" y="76.00" width="1.20" height="2.40" fill="#2f6fb5" /><rect x="208.40" y="80.10" width="1.20" height="2.40" fill="#2f6fb5" /><path d="M211,72.8 L218.2,72.8" stroke="#666" stroke-width="1.1"/><path d="M211,77.2 L218.2,77.2" stroke="#666" stroke-width="1.1"/><path d="M211,81.3 L218.2,81.3" stroke="#666" stroke-width="1.1"/><path d="M223.40,76.60 L225.60,78.80 L227.80,76.60" stroke="#605e5c" stroke-width="0.9" fill="none"/><rect x="234.20" y="70.00" width="0.80" height="14.00" fill="#d6d4d2" /><path d="M240.3,72.8 L250,72.8" stroke="#b8b8b8" stroke-width="1.1"/><path d="M240.3,81.3 L250,81.3" stroke="#b8b8b8" stroke-width="1.1"/><path d="M244.5,75.6 L250,75.6" stroke="#b8b8b8" stroke-width="1.1"/><path d="M244.5,78.5 L250,78.5" stroke="#b8b8b8" stroke-width="1.1"/><path d="M243.2,74.8 L240.6,77 L243.2,79.2" stroke="#b8b8b8" stroke-width="0.9" fill="none"/><path d="M257,72.8 L266.8,72.8" stroke="#555" stroke-width="1.1"/><path d="M257,81.3 L266.8,81.3" stroke="#555" stroke-width="1.1"/><path d="M261.5,75.6 L266.8,75.6" stroke="#555" stroke-width="1.1"/><path d="M261.5,78.5 L266.8,78.5" stroke="#555" stroke-width="1.1"/><path d="M257.4,74.8 L260,77 L257.4,79.2 Z" fill="#2f6fb5"/><rect x="272.20" y="70.00" width="0.80" height="14.00" fill="#d6d4d2" /><path d="M279.3,72 L279.3,82 M277.8,73.6 L279.3,72 L280.8,73.6 M277.8,80.4 L279.3,82 L280.8,80.4" stroke="#2f6fb5" stroke-width="0.9" fill="none"/><path d="M282.5,72.8 L289,72.8" stroke="#666" stroke-width="1.1"/><path d="M282.5,75.6 L289,75.6" stroke="#666" stroke-width="1.1"/><path d="M282.5,78.5 L289,78.5" stroke="#666" stroke-width="1.1"/><path d="M282.5,81.3 L289,81.3" stroke="#666" stroke-width="1.1"/><path d="M292.00,76.60 L294.20,78.80 L296.40,76.60" stroke="#605e5c" stroke-width="0.9" fill="none"/><path d="M181.5,94.5 L191.5,94.5" stroke="#666" stroke-width="1.1"/><path d="M181.5,100.5 L191.5,100.5" stroke="#666" stroke-width="1.1"/><path d="M181.5,97.5 L188.5,97.5" stroke="#666" stroke-width="1.1"/><path d="M181.5,103.2 L188.5,103.2" stroke="#666" stroke-width="1.1"/><path d="M198,94.5 L208,94.5" stroke="#666" stroke-width="1.1"/><path d="M198,100.5 L208,100.5" stroke="#666" stroke-width="1.1"/><path d="M199.5,97.5 L206.5,97.5" stroke="#666" stroke-width="1.1"/><path d="M199.5,103.2 L206.5,103.2" stroke="#666" stroke-width="1.1"/><path d="M214.3,94.5 L224.5,94.5" stroke="#666" stroke-width="1.1"/><path d="M214.3,100.5 L224.5,100.5" stroke="#666" stroke-width="1.1"/><path d="M217.3,97.5 L224.5,97.5" stroke="#666" stroke-width="1.1"/><path d="M217.3,103.2 L224.5,103.2" stroke="#666" stroke-width="1.1"/><rect x="228.10" y="91.50" width="15.60" height="16.00" fill="#cbcbcb" stroke="#9e9e9e" stroke-width="0.8"/><path d="M231.4,94.5 L240.8,94.5" stroke="#555" stroke-width="1.1"/><path d="M231.4,97.5 L240.8,97.5" stroke="#555" stroke-width="1.1"/><path d="M231.4,100.5 L240.8,100.5" stroke="#555" stroke-width="1.1"/><path d="M231.4,103.2 L240.8,103.2" stroke="#555" stroke-width="1.1"/><rect x="252.70" y="96.40" width="4.20" height="4.80" fill="#8ec3ee" /><rect x="257.90" y="96.40" width="4.20" height="4.80" fill="#8ec3ee" /><path d="M266.20,98.20 L268.40,100.40 L270.60,98.20" stroke="#605e5c" stroke-width="0.9" fill="none"/><path d="M304.4,66.6 L304.4,76.8 M302.8,75 L304.4,77 L306,75" stroke="#444" stroke-width="0.95" fill="none"/><path d="M308,71.2 L309.8,66.4 L311.6,71.2 M308.7,69.6 L310.9,69.6" stroke="#2f6fb5" stroke-width="0.8" fill="none"/><path d="M309.8,77 L309.8,72.4 M308.4,73.8 L309.8,72.2 L311.2,73.8" stroke="#444" stroke-width="0.9" fill="none"/><text xml:space="preserve" x="316.00" y="75.30" font-size="9.0" fill="#444" textLength="49" lengthAdjust="spacingAndGlyphs" >Text Direction</text><path d="M367.80,71.10 L370.00,73.30 L372.20,71.10" stroke="#605e5c" stroke-width="0.9" fill="none"/><path d="M305.5,83.5 L303.6,83.5 L303.6,93.5 L305.5,93.5 M311,83.5 L312.9,83.5 L312.9,93.5 L311,93.5" stroke="#555" stroke-width="0.8" fill="none"/><path d="M308.2,84.5 L308.2,92.5 M306.8,86 L308.2,84.5 L309.6,86 M306.8,91 L308.2,92.5 L309.6,91" stroke="#2f6fb5" stroke-width="0.8" fill="none"/><text xml:space="preserve" x="316.00" y="91.90" font-size="9.0" fill="#444" textLength="35" lengthAdjust="spacingAndGlyphs" >Align Text</text><path d="M353.80,87.70 L356.00,89.90 L358.20,87.70" stroke="#605e5c" stroke-width="0.9" fill="none"/><path d="M303.6,100.6 L308.2,100.6 L309.6,102.4 L305,102.4 Z" fill="#8fd3a8" stroke="#2aa36b" stroke-width="0.8"/><path d="M304.4,103.2 L306.4,105.6" stroke="#2aa36b" stroke-width="0.8"/><rect x="307.4" y="103.2" width="6.4" height="5.4" fill="#f3f2f1" stroke="#555" stroke-width="0.9"/><path d="M309.6,105.2 L313.8,105.2 M309.6,105.2 L309.6,108.6" stroke="#555" stroke-width="0.8"/><text xml:space="preserve" x="316.00" y="108.40" font-size="9.0" fill="#444" textLength="72" lengthAdjust="spacingAndGlyphs" >Convert to SmartArt</text><path d="M390.80,104.10 L393.00,106.30 L395.20,104.10" stroke="#605e5c" stroke-width="0.9" fill="none"/><text xml:space="preserve" x="284.00" y="125.20" font-size="8.2" fill="#555" text-anchor="middle" >Paragraph</text><path d="M398,119.8 L403.6,119.8 L403.6,125.2 L398,125.2 Z M399.6,121.4 L402.6,124.4 M402.6,122.4 L402.6,124.4 L400.6,124.4" stroke="#666" stroke-width="0.7" fill="none"/><rect x="405.00" y="64.00" width="0.90" height="61.00" fill="#d6d4d2" /><rect x="413.60" y="65.60" width="94.40" height="42.90" fill="#ffffff" stroke="#e1dfdd" stroke-width="0.8"/><rect x="498.00" y="65.60" width="10.00" height="42.90" fill="#f7f7f7" stroke="#e1dfdd" stroke-width="0.8"/><path d="M498,80 L508,80 M498,93.7 L508,93.7" stroke="#d8d6d4" stroke-width="0.8"/><path d="M501.3,73.6 L503,72 L504.7,73.6" stroke="#c8c8c8" stroke-width="0.8" fill="none"/><path d="M501.02,86.01 L503.00,87.99 L504.98,86.01" stroke="#555" stroke-width="0.9" fill="none"/><path d="M500.8,98.2 L505.2,98.2" stroke="#555" stroke-width="0.8"/><path d="M501.02,100.51 L503.00,102.49 L504.98,100.51" stroke="#555" stroke-width="0.9" fill="none"/><rect x="416.6" y="69.2" width="9.4" height="8.2" fill="#dcecfb" stroke="#3a86cf" stroke-width="1.2"/><path d="M419.3,76 L421.3,70.8 L423.3,76 M420,74.4 L422.6,74.4" stroke="#2f6fb5" stroke-width="1.1" fill="none"/><path d="M430.3,68.3 L440,78.3" stroke="#4f4f4f" stroke-width="1.1"/><path d="M443.3,67.8 L453,77.8" stroke="#4f4f4f" stroke-width="1.1"/><path d="M450.4,78.6 L453.8,78.6 L453.8,75.2 Z" fill="#4f4f4f"/><rect x="457.4" y="69.3" width="10.4" height="7.9" fill="none" stroke="#4f4f4f" stroke-width="1.1"/><ellipse cx="476.4" cy="73.3" rx="5.4" ry="4.1" fill="none" stroke="#4f4f4f" stroke-width="1.1"/><rect x="484.8" y="69.3" width="10.8" height="7.9" rx="2.2" fill="none" stroke="#4f4f4f" stroke-width="1.1"/><path d="M416.6,92 L421.3,82.2 L426,92 Z" fill="none" stroke="#4f4f4f" stroke-width="1.1" stroke-linejoin="round"/><path d="M430.2,82.6 L434.8,82.6 L434.8,91.6 L440,91.6" fill="none" stroke="#4f4f4f" stroke-width="1.1"/><path d="M443.3,82.6 L447.9,82.6 L447.9,91.6 L452.5,91.6" fill="none" stroke="#4f4f4f" stroke-width="1.1"/><circle cx="452.8" cy="91.6" r="1.2" fill="#4f4f4f"/><path d="M457.6,84.9 L463,84.9 L463,82.6 L467.6,86.8 L463,91 L463,88.7 L457.6,88.7 Z" fill="none" stroke="#4f4f4f" stroke-width="1.1" stroke-linejoin="round"/><path d="M474.8,81.8 L478.8,81.8 L478.8,87.2 L481.4,87.2 L476.8,92.2 L472.2,87.2 L474.8,87.2 Z" fill="none" stroke="#4f4f4f" stroke-width="1.1" stroke-linejoin="round"/><path d="M485,91.8 L485,82.4 L490.6,82.4 L492.4,84.6 Q495.6,85.6 495.6,88.6 L495.6,91.8 Z" fill="none" stroke="#4f4f4f" stroke-width="1.1" stroke-linejoin="round"/><path d="M417.6,96.8 Q415.8,101.5 418.8,104.6 Q422,106.6 425.6,105.4 Q427,104 425,103 Q421.5,102.5 420.5,101.5 Q423.5,101 424.5,98.5 Q424,96.5 422,97 Q419.5,98 419.6,101.5" fill="none" stroke="#4f4f4f" stroke-width="1.1"/><path d="M430.2,96.6 Q439.8,97 440.8,106" fill="none" stroke="#4f4f4f" stroke-width="1.1"/><path d="M443.4,100.5 Q445.5,96.3 447.6,97 Q449.5,98.5 451,102.5 Q452.3,105 454,105.3" fill="none" stroke="#4f4f4f" stroke-width="1.1"/><path d="M464.6,96.3 Q462.4,96.3 462.4,98.5 L462.4,100 Q462.4,101.2 460.6,101.2 Q462.4,101.2 462.4,102.4 L462.4,103.8 Q462.4,106 464.6,106" fill="none" stroke="#4f4f4f" stroke-width="1.1"/><path d="M476.4,96.3 Q478.6,96.3 478.6,98.5 L478.6,100 Q478.6,101.2 480.4,101.2 Q478.6,101.2 478.6,102.4 L478.6,103.8 Q478.6,106 476.4,106" fill="none" stroke="#4f4f4f" stroke-width="1.1"/><path d="M490.5,95.8 L492,99.6 L496,99.8 L492.9,102.3 L494,106 L490.5,103.9 L487,106 L488.1,102.3 L485,99.8 L489,99.6 Z" fill="none" stroke="#4f4f4f" stroke-width="1.1" stroke-linejoin="round"/><rect x="519.8" y="70.3" width="12.6" height="13" fill="#f7d98b" stroke="#e7b24a" stroke-width="0.8"/><rect x="516.3" y="67.2" width="8" height="7.4" fill="#fbfbfb" stroke="#666" stroke-width="1.1"/><rect x="527.8" y="78.3" width="8" height="7.6" fill="#fbfbfb" stroke="#666" stroke-width="1.1"/><text xml:space="preserve" x="526.00" y="98.40" font-size="9" fill="#444" text-anchor="middle" textLength="29" lengthAdjust="spacingAndGlyphs" >Arrange</text><path d="M523.80,105.10 L526.00,107.30 L528.20,105.10" stroke="#605e5c" stroke-width="0.9" fill="none"/><rect x="549" y="67.3" width="18.8" height="18.6" fill="#fbfbfb" stroke="#666" stroke-width="1.1"/><path d="M569.8,74 L561.5,82.2" stroke="#666" stroke-width="2.0" stroke-linecap="round"/><path d="M561.8,81.6 Q557,82.2 555,87 Q560.5,87.4 563,83.4 Z" fill="#4b9de0" stroke="#3286d0" stroke-width="0.6"/><text xml:space="preserve" x="559.00" y="98.40" font-size="9" fill="#444" text-anchor="middle" textLength="21" lengthAdjust="spacingAndGlyphs" >Quick</text><text xml:space="preserve" x="554.20" y="109.60" font-size="9" fill="#444" text-anchor="middle" textLength="20.4" lengthAdjust="spacingAndGlyphs" >Styles</text><path d="M567.40,105.40 L569.60,107.60 L571.80,105.40" stroke="#605e5c" stroke-width="0.9" fill="none"/><path d="M578.8,69.6 L582.3,66.1 L586.2,70 L582.7,73.5 Z" fill="none" stroke="#555" stroke-width="1"/><path d="M586.5,69 Q588,71.5 586.8,72.3 Q585.6,71.5 586.5,69 Z" fill="#333"/><rect x="576.6" y="74.1" width="11.2" height="2.3" fill="#c9403a"/><text xml:space="preserve" x="590.00" y="75.50" font-size="9" fill="#444" textLength="34.42" lengthAdjust="spacingAndGlyphs" >Shape Fill</text><rect x="577.6" y="82" width="7.4" height="6.6" fill="none" stroke="#555" stroke-width="1"/><path d="M580.5,87.6 L587,81.1" stroke="#3286d0" stroke-width="2"/><rect x="576.6" y="90.1" width="11.2" height="2.3" fill="#3286d0"/><text xml:space="preserve" x="590.00" y="90.80" font-size="9" fill="#444" textLength="49.05" lengthAdjust="spacingAndGlyphs" >Shape Outline</text><path d="M578,104.8 L578,101.6 Q578,99 581,98.6 L585.8,98.6 Q587.8,99 587.6,101.4 L586,104.6 Q585,106.4 582.6,106.4 L579.6,106.4 Q578,106.3 578,104.8 Z" fill="none" stroke="#444" stroke-width="1.1"/><path d="M578.4,102.6 L584.6,102.6 L587.2,99.6" stroke="#444" stroke-width="0.9" fill="none"/><text xml:space="preserve" x="590.00" y="106.20" font-size="9" fill="#444" textLength="48.05" lengthAdjust="spacingAndGlyphs" >Shape Effects</text><text xml:space="preserve" x="526.00" y="125.50" font-size="8.2" fill="#555" text-anchor="middle" >Drawing</text>
</g>
<rect x="600.00" y="122.00" width="580.00" height="540.00" fill="#e7e6e6" /><rect x="601.30" y="131.30" width="580.00" height="509.70" fill="#ffffff" /><rect x="601.30" y="131.30" width="580.00" height="80.70" fill="#29176f" /><text xml:space="preserve" x="628.00" y="166.20" font-size="16.9" fill="#ffffff" font-weight="bold" stroke="#ffffff" stroke-width="0.35">CHƯƠNG 3. PHÂN TÍCH TÌNH HÌNH TÀI CHÍNH VÀ GIẢI PHÁP CẢI THIỆN</text><text xml:space="preserve" x="628.00" y="197.20" font-size="16.9" fill="#ffffff" font-weight="bold" stroke="#ffffff" stroke-width="0.35">TÀI CHÍNH CỦA CÔNG TY TNHH KIỂM SOÁT DỊCH HẠI QUỐC TẾ</text><text xml:space="preserve" x="628.00" y="240.80" font-size="16.8" fill="#ec1c24" font-weight="bold" >3.1.1.2. Đánh giá mức độ độc lập về mặt tài chính</text><path d="M688.71,243.20 L690.21,242.30 L691.71,244.10 L693.21,242.30 L694.71,244.10 L696.21,242.30 L697.71,244.10 L699.21,242.30 L700.71,244.10 L702.21,242.30 L703.71,244.10 L705.21,242.30 L706.71,244.10 L708.21,242.30 L709.71,244.10 L711.21,242.30 L712.71,244.10 L714.21,242.30 L715.71,244.10 L717.21,242.30 L718.71,244.10 L720.21,242.30 L721.71,244.10 L723.21,242.30 L724.71,244.10 L726.21,242.30 L727.71,244.10 L729.21,242.30 L730.70,244.10" stroke="#e45050" stroke-width="0.8" fill="none"/><path d="M735.37,243.20 L736.87,242.30 L738.37,244.10 L739.87,242.30 L741.37,244.10 L742.87,242.30 L744.37,244.10 L745.87,242.30 L747.37,244.10 L748.87,242.30 L750.37,244.10 L751.87,242.30 L753.37,244.10 L754.87,242.30 L756.37,244.10 L757.87,242.30 L759.37,244.10 L759.64,242.30" stroke="#e45050" stroke-width="0.8" fill="none"/><path d="M764.31,243.20 L765.81,242.30 L767.31,244.10 L768.81,242.30 L770.31,244.10 L771.81,242.30 L773.31,244.10 L774.81,242.30 L776.31,244.10 L777.81,242.30 L779.31,244.10 L780.81,242.30 L782.31,244.10 L783.81,242.30 L785.31,244.10 L786.81,242.30 L788.31,244.10 L789.81,242.30 L791.31,244.10 L792.81,242.30 L794.31,244.10 L795.81,242.30 L797.31,244.10 L798.81,242.30 L800.31,244.10 L800.75,242.30" stroke="#e45050" stroke-width="0.8" fill="none"/><path d="M830.61,243.20 L832.11,242.30 L833.61,244.10 L835.11,242.30 L836.61,244.10 L838.11,242.30 L839.61,244.10 L841.11,242.30 L842.61,244.10 L844.11,242.30 L845.61,244.10 L847.11,242.30 L848.61,244.10 L850.11,242.30 L851.61,244.10 L853.11,242.30 L854.61,244.10 L856.11,242.30 L857.61,244.10 L859.11,242.30 L860.48,244.10" stroke="#e45050" stroke-width="0.8" fill="none"/><path d="M865.14,243.20 L866.64,242.30 L868.14,244.10 L869.64,242.30 L871.14,244.10 L872.64,242.30 L874.14,244.10 L875.64,242.30 L877.14,244.10 L878.64,242.30 L880.14,244.10 L881.64,242.30 L883.14,244.10 L884.64,242.30 L886.14,244.10 L887.64,242.30 L889.14,244.10 L889.41,242.30" stroke="#e45050" stroke-width="0.8" fill="none"/><path d="M894.08,243.20 L895.58,242.30 L897.08,244.10 L898.58,242.30 L900.08,244.10 L901.58,242.30 L903.08,244.10 L904.58,242.30 L906.08,244.10 L907.58,242.30 L909.08,244.10 L910.58,242.30 L912.08,244.10 L912.77,242.30" stroke="#e45050" stroke-width="0.8" fill="none"/><path d="M917.43,243.20 L918.93,242.30 L920.43,244.10 L921.93,242.30 L923.43,244.10 L924.93,242.30 L926.43,244.10 L927.93,242.30 L929.43,244.10 L930.93,242.30 L932.43,244.10 L933.93,242.30 L935.43,244.10 L936.93,242.30 L938.43,244.10 L939.93,242.30 L941.43,244.10 L942.93,242.30 L944.43,244.10 L945.93,242.30 L947.31,244.10" stroke="#e45050" stroke-width="0.8" fill="none"/><path d="M951.97,243.20 L953.47,242.30 L954.97,244.10 L956.47,242.30 L957.97,244.10 L959.47,242.30 L960.97,244.10 L962.47,242.30 L963.97,244.10 L965.47,242.30 L966.97,244.10 L968.47,242.30 L969.97,244.10 L971.47,242.30 L971.58,244.10" stroke="#e45050" stroke-width="0.8" fill="none"/><path d="M976.25,243.20 L977.75,242.30 L979.25,244.10 L980.75,242.30 L982.25,244.10 L983.75,242.30 L985.25,244.10 L986.75,242.30 L988.25,244.10 L989.75,242.30 L991.25,244.10 L992.75,242.30 L994.25,244.10 L995.75,242.30 L997.25,244.10 L998.75,242.30 L1000.25,244.10 L1001.75,242.30 L1003.25,244.10 L1004.75,242.30 L1006.25,244.10 L1007.75,242.30 L1009.25,244.10 L1010.75,242.30 L1012.25,244.10 L1013.75,242.30 L1015.25,244.10 L1016.75,242.30 L1018.25,244.10 L1019.75,242.30 L1021.04,244.10" stroke="#e45050" stroke-width="0.8" fill="none"/><rect x="620.00" y="256.50" width="586.70" height="362.00" fill="#ffffff" /><rect x="620.00" y="256.50" width="586.70" height="47.10" fill="#4f81bd" /><text xml:space="preserve" x="798.35" y="287.80" font-size="15.0" fill="#ffffff" font-weight="bold" text-anchor="middle" >Chỉ tiêu</text><path d="M799.18,290.00 L800.68,289.10 L802.18,290.90 L803.68,289.10 L805.18,290.90 L806.68,289.10 L808.18,290.90 L809.68,289.10 L811.18,290.90 L812.68,289.10 L814.18,290.90 L815.68,289.10 L817.18,290.90 L818.68,289.10 L820.18,290.90 L821.68,289.10 L823.18,290.90 L824.68,289.10 L825.85,290.90" stroke="#e45050" stroke-width="0.8" fill="none"/><text xml:space="preserve" x="1071.70" y="287.80" font-size="15.0" fill="#ffffff" font-weight="bold" text-anchor="middle" >Cuối năm</text><rect x="1037.53" y="289.00" width="68.33" height="0.80" fill="#f4f4f8" /><path d="M1037.53,290.70 L1039.03,289.80 L1040.53,291.60 L1042.03,289.80 L1043.53,291.60 L1045.03,289.80 L1046.53,291.60 L1048.03,289.80 L1049.53,291.60 L1051.03,289.80 L1052.53,291.60 L1054.03,289.80 L1055.53,291.60 L1057.03,289.80 L1058.53,291.60 L1060.03,289.80 L1061.53,291.60 L1063.03,289.80 L1064.53,291.60 L1066.03,289.80 L1067.53,291.60 L1069.03,289.80 L1070.53,291.60 L1072.03,289.80 L1073.53,291.60 L1075.03,289.80 L1076.53,291.60 L1078.03,289.80 L1079.53,291.60 L1081.03,289.80 L1082.53,291.60 L1084.03,289.80 L1085.53,291.60 L1087.03,289.80 L1088.53,291.60 L1090.03,289.80 L1091.53,291.60 L1093.03,289.80 L1094.53,291.60 L1096.03,289.80 L1097.53,291.60 L1099.03,289.80 L1100.53,291.60 L1102.03,289.80 L1103.53,291.60 L1105.03,289.80 L1105.87,291.60" stroke="#e8485a" stroke-width="0.9" fill="none"/><rect x="619.60" y="255.80" width="586.70" height="1.40" fill="#1f3a66" /><rect x="619.30" y="256.50" width="1.40" height="362.70" fill="#2b2b2b" /><rect x="976.00" y="256.50" width="1.40" height="362.70" fill="#2b2b2b" /><rect x="1166.00" y="256.50" width="1.40" height="362.70" fill="#2b2b2b" /><rect x="620.00" y="302.90" width="586.70" height="1.40" fill="#2a2a3a" /><rect x="620.00" y="335.30" width="586.70" height="1.40" fill="#2b2b2b" /><rect x="620.00" y="373.00" width="586.70" height="1.40" fill="#2b2b2b" /><rect x="620.00" y="407.50" width="586.70" height="1.40" fill="#2b2b2b" /><rect x="620.00" y="439.30" width="586.70" height="1.40" fill="#2b2b2b" /><rect x="620.00" y="471.50" width="586.70" height="1.40" fill="#2b2b2b" /><rect x="620.00" y="503.80" width="586.70" height="1.40" fill="#2b2b2b" /><rect x="620.00" y="536.20" width="586.70" height="1.40" fill="#2b2b2b" /><rect x="620.00" y="568.50" width="586.70" height="1.40" fill="#2b2b2b" /><rect x="620.00" y="617.80" width="586.70" height="1.40" fill="#2b2b2b" /><text xml:space="preserve" x="626.50" y="326.10" font-size="15.0" fill="#131358" font-weight="bold" stroke="#131358" stroke-width="0.2">1. Nguồn VCSH</text><path d="M643.18,328.05 L644.68,327.15 L646.18,328.95 L647.68,327.15 L649.18,328.95 L650.68,327.15 L652.18,328.95 L653.68,327.15 L655.18,328.95 L656.68,327.15 L658.18,328.95 L659.68,327.15 L661.18,328.95 L662.68,327.15 L664.18,328.95 L665.68,327.15 L667.18,328.95 L668.68,327.15 L670.18,328.95 L671.68,327.15 L673.18,328.95 L674.68,327.15 L676.18,328.95 L677.68,327.15 L679.18,328.95 L680.68,327.15 L682.18,328.95 L683.68,327.15 L685.18,328.95 L686.68,327.15 L688.18,328.95 L689.68,327.15 L690.66,328.95" stroke="#e45050" stroke-width="0.8" fill="none"/><text xml:space="preserve" x="1161.20" y="326.10" font-size="15.0" fill="#131358" font-weight="bold" text-anchor="end" stroke="#131358" stroke-width="0.2">8.537.001.615</text><text xml:space="preserve" x="626.50" y="361.15" font-size="15.0" fill="#131358" font-weight="bold" stroke="#131358" stroke-width="0.2">2. Tổng Tài sản</text><path d="M643.18,363.10 L644.68,362.20 L646.18,364.00 L647.68,362.20 L649.18,364.00 L650.68,362.20 L652.18,364.00 L653.68,362.20 L655.18,364.00 L656.68,362.20 L658.18,364.00 L659.68,362.20 L661.18,364.00 L662.68,362.20 L664.18,364.00 L665.68,362.20 L667.18,364.00 L668.68,362.20 L670.18,364.00 L671.68,362.20 L673.18,364.00 L674.68,362.20 L676.18,364.00 L677.68,362.20 L679.18,364.00 L679.82,362.20" stroke="#e45050" stroke-width="0.8" fill="none"/><path d="M683.99,363.10 L685.49,362.20 L686.99,364.00 L688.49,362.20 L689.99,364.00 L691.49,362.20 L692.99,364.00 L694.49,362.20 L695.99,364.00 L697.49,362.20 L698.99,364.00 L700.49,362.20 L701.99,364.00 L703.49,362.20 L704.99,364.00 L705.66,362.20" stroke="#e45050" stroke-width="0.8" fill="none"/><path d="M709.83,363.10 L711.33,362.20 L712.83,364.00 L714.33,362.20 L715.83,364.00 L717.33,362.20 L718.83,364.00 L720.33,362.20 L721.83,364.00 L723.33,362.20 L724.83,364.00 L726.33,362.20 L727.83,364.00 L729.33,362.20 L730.83,364.00 L732.33,362.20 L733.83,364.00 L735.33,362.20 L735.67,364.00" stroke="#e45050" stroke-width="0.8" fill="none"/><text xml:space="preserve" x="1161.20" y="361.15" font-size="15.0" fill="#131358" font-weight="bold" text-anchor="end" stroke="#131358" stroke-width="0.2">88.155.952.563</text><text xml:space="preserve" x="626.50" y="397.25" font-size="15.0" fill="#131358" font-weight="bold" stroke="#131358" stroke-width="0.2">3. Tỷ suất tài trợ, (3=1:2) (lần)</text><path d="M643.18,399.20 L644.68,398.30 L646.18,400.10 L647.68,398.30 L649.18,400.10 L650.68,398.30 L652.18,400.10 L653.68,398.30 L655.18,400.10 L656.68,398.30 L658.18,400.10 L659.68,398.30 L660.68,400.10" stroke="#e45050" stroke-width="0.8" fill="none"/><path d="M664.85,399.20 L666.35,398.30 L667.85,400.10 L669.35,398.30 L670.85,400.10 L672.35,398.30 L673.85,400.10 L675.35,398.30 L676.85,400.10 L678.35,398.30 L679.85,400.10 L681.35,398.30 L682.85,400.10 L684.35,398.30 L685.85,400.10 L687.35,398.30 L688.85,400.10 L690.35,398.30 L691.85,400.10 L693.35,398.30 L694.85,400.10 L695.69,398.30" stroke="#e45050" stroke-width="0.8" fill="none"/><path d="M699.85,399.20 L701.35,398.30 L702.85,400.10 L704.35,398.30 L705.85,400.10 L707.35,398.30 L708.85,400.10 L710.35,398.30 L711.85,400.10 L713.35,398.30 L714.85,400.10 L716.35,398.30 L717.36,400.10" stroke="#e45050" stroke-width="0.8" fill="none"/><path d="M721.52,399.20 L723.02,398.30 L724.52,400.10 L726.02,398.30 L727.52,400.10 L729.02,398.30 L730.52,400.10 L732.02,398.30 L733.52,400.10 L735.02,398.30 L736.52,400.10 L738.02,398.30 L739.52,400.10 L741.02,398.30 L742.52,400.10 L743.02,398.30" stroke="#e45050" stroke-width="0.8" fill="none"/><path d="M809.28,399.20 L810.78,398.30 L812.28,400.10 L813.78,398.30 L815.28,400.10 L816.78,398.30 L818.28,400.10 L819.78,398.30 L821.28,400.10 L822.78,398.30 L824.28,400.10 L825.78,398.30 L827.28,400.10 L828.78,398.30 L830.28,400.10 L830.95,398.30" stroke="#e45050" stroke-width="0.8" fill="none"/><text xml:space="preserve" x="1161.20" y="397.25" font-size="15.0" fill="#131358" font-weight="bold" text-anchor="end" stroke="#131358" stroke-width="0.2">0,097</text><text xml:space="preserve" x="626.50" y="430.40" font-size="15.0" fill="#131358" font-weight="bold" stroke="#131358" stroke-width="0.2">4. Nợ phải trả</text><text xml:space="preserve" x="1161.20" y="430.40" font-size="15.0" fill="#131358" font-weight="bold" text-anchor="end" stroke="#131358" stroke-width="0.2">79.618.950.948</text><text xml:space="preserve" x="626.50" y="462.40" font-size="15.0" fill="#131358" font-weight="bold" stroke="#131358" stroke-width="0.2">5. Tổng nguồn vốn</text><text xml:space="preserve" x="1161.20" y="462.40" font-size="15.0" fill="#131358" font-weight="bold" text-anchor="end" stroke="#131358" stroke-width="0.2">88.155.952.563</text><text xml:space="preserve" x="626.50" y="494.65" font-size="15.0" fill="#131358" font-weight="bold" stroke="#131358" stroke-width="0.2">6. Hệ số nợ, (6 =4:5) (lần)</text><path d="M643.18,496.60 L644.68,495.70 L646.18,497.50 L647.68,495.70 L649.18,497.50 L650.68,495.70 L652.18,497.50 L653.68,495.70 L655.18,497.50 L656.68,495.70 L658.18,497.50 L659.68,495.70 L661.18,497.50 L662.35,495.70" stroke="#e45050" stroke-width="0.8" fill="none"/><path d="M666.52,496.60 L668.02,495.70 L669.52,497.50 L671.02,495.70 L672.52,497.50 L674.02,495.70 L675.52,497.50 L677.02,495.70 L678.52,497.50 L680.02,495.70 L681.52,497.50 L683.02,495.70 L684.02,497.50" stroke="#e45050" stroke-width="0.8" fill="none"/><path d="M688.19,496.60 L689.69,495.70 L691.19,497.50 L692.69,495.70 L694.19,497.50 L695.69,495.70 L697.19,497.50 L698.69,495.70 L700.19,497.50 L701.69,495.70 L703.19,497.50 L704.69,495.70 L706.19,497.50 L707.69,495.70 L708.01,497.50" stroke="#e45050" stroke-width="0.8" fill="none"/><path d="M778.45,496.60 L779.95,495.70 L781.45,497.50 L782.95,495.70 L784.45,497.50 L785.95,495.70 L787.45,497.50 L788.95,495.70 L790.45,497.50 L791.95,495.70 L793.45,497.50 L794.95,495.70 L796.45,497.50 L797.95,495.70 L799.45,497.50 L800.12,495.70" stroke="#e45050" stroke-width="0.8" fill="none"/><text xml:space="preserve" x="1161.20" y="494.65" font-size="15.0" fill="#131358" font-weight="bold" text-anchor="end" stroke="#131358" stroke-width="0.2">0,903</text><text xml:space="preserve" x="626.50" y="527.00" font-size="15.0" fill="#131358" font-weight="bold" stroke="#131358" stroke-width="0.2">7. Nợ phải trả</text><path d="M643.18,528.95 L644.68,528.05 L646.18,529.85 L647.68,528.05 L649.18,529.85 L650.68,528.05 L652.18,529.85 L653.68,528.05 L655.18,529.85 L656.68,528.05 L658.18,529.85 L659.68,528.05 L661.18,529.85 L662.68,528.05 L664.18,529.85 L664.67,528.05" stroke="#e45050" stroke-width="0.8" fill="none"/><path d="M668.84,528.95 L670.34,528.05 L671.84,529.85 L673.34,528.05 L674.84,529.85 L676.34,528.05 L677.84,529.85 L679.34,528.05 L680.84,529.85 L682.34,528.05 L683.84,529.85 L685.34,528.05 L686.84,529.85 L688.34,528.05 L689.84,529.85 L691.34,528.05 L692.84,529.85 L694.34,528.05 L695.84,529.85 L697.34,528.05 L698.84,529.85 L699.67,528.05" stroke="#e45050" stroke-width="0.8" fill="none"/><path d="M703.84,528.95 L705.34,528.05 L706.84,529.85 L708.34,528.05 L709.84,529.85 L711.34,528.05 L712.84,529.85 L714.34,528.05 L715.84,529.85 L717.34,528.05 L718.84,529.85 L720.34,528.05 L721.84,529.85 L723.01,528.05" stroke="#e45050" stroke-width="0.8" fill="none"/><text xml:space="preserve" x="1161.20" y="527.00" font-size="15.0" fill="#131358" font-weight="bold" text-anchor="end" stroke="#131358" stroke-width="0.2">79.618.950.948</text><text xml:space="preserve" x="626.50" y="559.35" font-size="15.0" fill="#131358" font-weight="bold" stroke="#131358" stroke-width="0.2">8. Vốn CSH</text><text xml:space="preserve" x="1161.20" y="559.35" font-size="15.0" fill="#131358" font-weight="bold" text-anchor="end" stroke="#131358" stroke-width="0.2">8.537.001.615</text><text xml:space="preserve" x="626.50" y="588.80" font-size="15.0" fill="#131358" font-weight="bold" stroke="#131358" stroke-width="0.2">9. Tỷ lệ nợ phải trả trên vốn chủ sở hữu (9 =7:8)</text><path d="M643.18,590.75 L644.68,589.85 L646.18,591.65 L647.68,589.85 L649.18,591.65 L650.68,589.85 L652.18,591.65 L653.68,589.85 L655.18,591.65 L656.68,589.85 L658.18,591.65 L659.68,589.85 L660.68,591.65" stroke="#e45050" stroke-width="0.8" fill="none"/><path d="M664.85,590.75 L666.35,589.85 L667.85,591.65 L669.35,589.85 L670.85,591.65 L672.35,589.85 L673.85,591.65 L675.35,589.85 L676.85,591.65 L677.35,589.85" stroke="#e45050" stroke-width="0.8" fill="none"/><path d="M681.52,590.75 L683.02,589.85 L684.52,591.65 L686.02,589.85 L687.52,591.65 L689.02,589.85 L690.52,591.65 L692.02,589.85 L693.52,591.65 L695.02,589.85 L696.52,591.65 L698.02,589.85 L699.52,591.65 L701.02,589.85 L701.35,591.65" stroke="#e45050" stroke-width="0.8" fill="none"/><path d="M705.51,590.75 L707.01,589.85 L708.51,591.65 L710.01,589.85 L711.51,591.65 L713.01,589.85 L714.51,591.65 L716.01,589.85 L717.51,591.65 L719.01,589.85 L720.51,591.65 L722.01,589.85 L723.51,591.65 L725.01,589.85 L726.51,591.65 L728.01,589.85 L729.51,591.65 L731.01,589.85 L732.51,591.65 L734.01,589.85 L735.51,591.65 L736.35,589.85" stroke="#e45050" stroke-width="0.8" fill="none"/><path d="M740.51,590.75 L742.01,589.85 L743.51,591.65 L745.01,589.85 L746.51,591.65 L748.01,589.85 L749.51,591.65 L751.01,589.85 L752.51,591.65 L754.01,589.85 L755.51,591.65 L757.01,589.85 L758.51,591.65 L759.69,589.85" stroke="#e45050" stroke-width="0.8" fill="none"/><path d="M796.36,590.75 L797.86,589.85 L799.36,591.65 L800.86,589.85 L802.36,591.65 L803.86,589.85 L805.36,591.65 L806.86,589.85 L808.36,591.65 L809.86,589.85 L811.36,591.65 L812.86,589.85 L814.36,591.65 L815.86,589.85 L817.36,591.65 L818.86,589.85 L820.36,591.65 L821.86,589.85 L823.02,591.65" stroke="#e45050" stroke-width="0.8" fill="none"/><path d="M827.19,590.75 L828.69,589.85 L830.19,591.65 L831.69,589.85 L833.19,591.65 L834.69,589.85 L836.19,591.65 L837.69,589.85 L839.19,591.65 L840.69,589.85 L842.19,591.65 L843.69,589.85 L845.19,591.65 L846.69,589.85 L848.19,591.65 L849.69,589.85 L851.19,591.65 L852.69,589.85 L853.86,591.65" stroke="#e45050" stroke-width="0.8" fill="none"/><path d="M858.02,590.75 L859.52,589.85 L861.02,591.65 L862.52,589.85 L864.02,591.65 L865.52,589.85 L867.02,591.65 L868.52,589.85 L870.02,591.65 L871.52,589.85 L873.02,591.65 L874.52,589.85 L876.02,591.65 L877.03,589.85" stroke="#e45050" stroke-width="0.8" fill="none"/><path d="M881.20,590.75 L882.70,589.85 L884.20,591.65 L885.70,589.85 L887.20,591.65 L888.70,589.85 L890.20,591.65 L891.70,589.85 L893.20,591.65 L894.70,589.85 L896.20,591.65 L897.70,589.85 L899.20,591.65 L900.70,589.85 L902.20,591.65 L903.70,589.85 L905.20,591.65 L906.70,589.85 L908.20,591.65 L909.70,589.85 L910.38,591.65" stroke="#e45050" stroke-width="0.8" fill="none"/><text xml:space="preserve" x="626.50" y="611.40" font-size="15.0" fill="#131358" font-weight="bold" stroke="#131358" stroke-width="0.2">(lần)</text><path d="M631.49,613.35 L632.99,612.45 L634.49,614.25 L635.99,612.45 L637.49,614.25 L638.99,612.45 L640.49,614.25 L641.99,612.45 L643.49,614.25 L644.99,612.45 L646.49,614.25 L647.99,612.45 L649.49,614.25 L650.99,612.45 L652.49,614.25 L653.16,612.45" stroke="#e45050" stroke-width="0.8" fill="none"/><text xml:space="preserve" x="1161.20" y="600.28" font-size="15.0" fill="#131358" font-weight="bold" text-anchor="end" stroke="#131358" stroke-width="0.2">9,326</text><rect x="600.00" y="641.00" width="580.00" height="14.00" fill="#e6e6e6" /><rect x="600.00" y="641.00" width="580.00" height="0.80" fill="#d0d0d0" />
<rect x="706" y="103.5" width="119.60000000000002" height="206.8" fill="#000" opacity="0.06"/><rect x="708" y="103.5" width="115.60000000000002" height="204.8" fill="#ffffff" stroke="#c8c6c4" stroke-width="0.8"/><text xml:space="preserve" x="718.00" y="117.40" font-size="8.2" fill="#323130" font-weight="bold" textLength="51" lengthAdjust="spacingAndGlyphs" >Theme Colors</text><rect x="711.00" y="125.30" width="7.80" height="7.70" fill="#FFFFFF" stroke="#e1e1e1" stroke-width="0.4"/><rect x="722.30" y="125.30" width="7.80" height="7.70" fill="#000000" /><rect x="733.60" y="125.30" width="7.80" height="7.70" fill="#EEECE1" /><rect x="744.90" y="125.30" width="7.80" height="7.70" fill="#1F497D" /><rect x="756.20" y="125.30" width="7.80" height="7.70" fill="#4F81BD" /><rect x="767.50" y="125.30" width="7.80" height="7.70" fill="#C0504D" /><rect x="778.80" y="125.30" width="7.80" height="7.70" fill="#9BBB59" /><rect x="790.10" y="125.30" width="7.80" height="7.70" fill="#8064A2" /><rect x="801.40" y="125.30" width="7.80" height="7.70" fill="#4BACC6" /><rect x="812.70" y="125.30" width="7.80" height="7.70" fill="#F79646" /><rect x="720.90" y="123.9" width="10.60" height="10.5" fill="none" stroke="#e8a87c" stroke-width="1.4"/><rect x="711.00" y="142.40" width="7.80" height="8.56" fill="#F2F2F2" /><rect x="711.00" y="150.96" width="7.80" height="8.56" fill="#D9D9D9" /><rect x="711.00" y="159.52" width="7.80" height="8.56" fill="#BFBFBF" /><rect x="711.00" y="168.08" width="7.80" height="8.56" fill="#A6A6A6" /><rect x="711.00" y="176.64" width="7.80" height="8.56" fill="#808080" /><rect x="722.30" y="142.40" width="7.80" height="8.56" fill="#7F7F7F" /><rect x="722.30" y="150.96" width="7.80" height="8.56" fill="#595959" /><rect x="722.30" y="159.52" width="7.80" height="8.56" fill="#3F3F3F" /><rect x="722.30" y="168.08" width="7.80" height="8.56" fill="#262626" /><rect x="722.30" y="176.64" width="7.80" height="8.56" fill="#0D0D0D" /><rect x="733.60" y="142.40" width="7.80" height="8.56" fill="#DDD9C3" /><rect x="733.60" y="150.96" width="7.80" height="8.56" fill="#C4BD97" /><rect x="733.60" y="159.52" width="7.80" height="8.56" fill="#938953" /><rect x="733.60" y="168.08" width="7.80" height="8.56" fill="#494429" /><rect x="733.60" y="176.64" width="7.80" height="8.56" fill="#1D1B10" /><rect x="744.90" y="142.40" width="7.80" height="8.56" fill="#C6D9F0" /><rect x="744.90" y="150.96" width="7.80" height="8.56" fill="#8DB3E2" /><rect x="744.90" y="159.52" width="7.80" height="8.56" fill="#548DD4" /><rect x="744.90" y="168.08" width="7.80" height="8.56" fill="#17365D" /><rect x="744.90" y="176.64" width="7.80" height="8.56" fill="#0F243E" /><rect x="756.20" y="142.40" width="7.80" height="8.56" fill="#DBE5F1" /><rect x="756.20" y="150.96" width="7.80" height="8.56" fill="#B8CCE4" /><rect x="756.20" y="159.52" width="7.80" height="8.56" fill="#95B3D7" /><rect x="756.20" y="168.08" width="7.80" height="8.56" fill="#366092" /><rect x="756.20" y="176.64" width="7.80" height="8.56" fill="#244061" /><rect x="767.50" y="142.40" width="7.80" height="8.56" fill="#F2DCDB" /><rect x="767.50" y="150.96" width="7.80" height="8.56" fill="#E5B9B7" /><rect x="767.50" y="159.52" width="7.80" height="8.56" fill="#D99694" /><rect x="767.50" y="168.08" width="7.80" height="8.56" fill="#953734" /><rect x="767.50" y="176.64" width="7.80" height="8.56" fill="#632423" /><rect x="778.80" y="142.40" width="7.80" height="8.56" fill="#EBF1DD" /><rect x="778.80" y="150.96" width="7.80" height="8.56" fill="#D7E3BC" /><rect x="778.80" y="159.52" width="7.80" height="8.56" fill="#C3D69B" /><rect x="778.80" y="168.08" width="7.80" height="8.56" fill="#76923C" /><rect x="778.80" y="176.64" width="7.80" height="8.56" fill="#4F6128" /><rect x="790.10" y="142.40" width="7.80" height="8.56" fill="#E5E0EC" /><rect x="790.10" y="150.96" width="7.80" height="8.56" fill="#CCC1D9" /><rect x="790.10" y="159.52" width="7.80" height="8.56" fill="#B2A2C7" /><rect x="790.10" y="168.08" width="7.80" height="8.56" fill="#5F497A" /><rect x="790.10" y="176.64" width="7.80" height="8.56" fill="#3F3151" /><rect x="801.40" y="142.40" width="7.80" height="8.56" fill="#DBEEF3" /><rect x="801.40" y="150.96" width="7.80" height="8.56" fill="#B7DDE8" /><rect x="801.40" y="159.52" width="7.80" height="8.56" fill="#92CDDC" /><rect x="801.40" y="168.08" width="7.80" height="8.56" fill="#31859B" /><rect x="801.40" y="176.64" width="7.80" height="8.56" fill="#205867" /><rect x="812.70" y="142.40" width="7.80" height="8.56" fill="#FDEADA" /><rect x="812.70" y="150.96" width="7.80" height="8.56" fill="#FBD5B5" /><rect x="812.70" y="159.52" width="7.80" height="8.56" fill="#FAC08F" /><rect x="812.70" y="168.08" width="7.80" height="8.56" fill="#E36C09" /><rect x="812.70" y="176.64" width="7.80" height="8.56" fill="#974806" /><rect x="711.00" y="194.20" width="110.00" height="0.80" fill="#e1dfdd" /><text xml:space="preserve" x="718.00" y="208.00" font-size="8.2" fill="#323130" font-weight="bold" textLength="59" lengthAdjust="spacingAndGlyphs" >Standard Colors</text><rect x="711.00" y="216.30" width="7.80" height="7.50" fill="#C00000" /><rect x="722.30" y="216.30" width="7.80" height="7.50" fill="#FF0000" /><rect x="733.60" y="216.30" width="7.80" height="7.50" fill="#FFC000" /><rect x="744.90" y="216.30" width="7.80" height="7.50" fill="#FFFF00" /><rect x="756.20" y="216.30" width="7.80" height="7.50" fill="#92D050" /><rect x="767.50" y="216.30" width="7.80" height="7.50" fill="#00B050" /><rect x="778.80" y="216.30" width="7.80" height="7.50" fill="#00B0F0" /><rect x="790.10" y="216.30" width="7.80" height="7.50" fill="#0070C0" /><rect x="801.40" y="216.30" width="7.80" height="7.50" fill="#002060" /><rect x="812.70" y="216.30" width="7.80" height="7.50" fill="#7030A0" /><rect x="711.00" y="232.20" width="110.00" height="0.80" fill="#e1dfdd" /><text xml:space="preserve" x="718.00" y="246.40" font-size="8.2" fill="#323130" font-weight="bold" textLength="52" lengthAdjust="spacingAndGlyphs" >Recent Colors</text><rect x="711.00" y="255.00" width="7.20" height="6.80" fill="#000080" /><rect x="711.00" y="269.80" width="110.00" height="0.80" fill="#e1dfdd" /><path d="M722.4,275.6 Q717.2,275.8 717.2,280.8 Q717.4,285.8 722.2,286 Q723.8,286 723.6,284.4 Q723.2,282.6 725,282.8 L726.2,282.8 Q727.8,282.6 727.8,280.6 Q727.4,275.6 722.4,275.6 Z" fill="none" stroke="#555" stroke-width="0.9"/><circle cx="719.8" cy="280.2" r="0.9" fill="#c0504d"/><circle cx="722.2" cy="278.2" r="0.9" fill="#c0504d"/><path d="M724.4,285.6 L727.6,280.8" stroke="#555" stroke-width="1"/><text xml:space="preserve" x="733.80" y="283.60" font-size="8.4" fill="#3b3a39" textLength="50" lengthAdjust="spacingAndGlyphs" >More Colors...</text><rect x="733.80" y="284.80" width="5.50" height="0.70" fill="#3b3a39" /><path d="M718.4,304.2 L719,302 L724.6,296.4 L726.4,298.2 L720.8,303.8 Z" fill="none" stroke="#444" stroke-width="0.9" stroke-linejoin="round"/><path d="M723.4,295.2 L727.6,299.4 M725.6,297.2 L728.2,294.6 Q729.6,293.4 730.6,294.4 Q731.6,295.4 730.4,296.8 L727.8,299.4" stroke="#444" stroke-width="1.1" fill="none"/><text xml:space="preserve" x="733.80" y="302.30" font-size="8.4" fill="#3b3a39" textLength="44" lengthAdjust="spacingAndGlyphs" >Eyedropper</text><rect x="733.80" y="303.50" width="4.80" height="0.70" fill="#3b3a39" /><rect x="719.3" y="212.9" width="15" height="13.6" fill="none" stroke="#ee3a36" stroke-width="3"/><rect x="722.2" y="215.6" width="9.2" height="8.2" fill="#ff1a10" stroke="#f9c59c" stroke-width="1.6"/>
<text xml:space="preserve" x="649.30" y="141.20" font-size="33.5" fill="#d41219" >2</text><text xml:space="preserve" x="735.40" y="253.40" font-size="33.5" fill="#d41219" >3</text><path d="M686,183 C673,167 670,141 678,125 C683,117 690,111 699,107 L701.5,111.5 C694,116 687,122 683.5,130 C678.5,142 679,163 687.2,182.5 Z" fill="#e34e3b"/><path d="M689,100.5 L712,103 L704,127.5 L699.5,111 Z" fill="#e34e3b"/>
</g>
</svg>
</body></html>
